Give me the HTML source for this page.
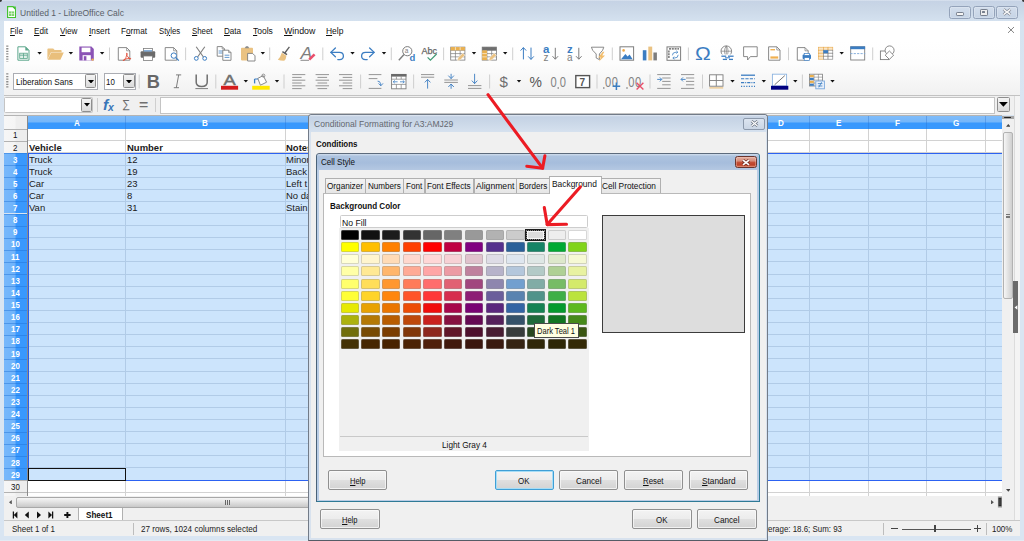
<!DOCTYPE html>
<html><head><meta charset="utf-8"><title>Untitled 1 - LibreOffice Calc</title>
<style>
html,body{margin:0;padding:0;}
body{width:1024px;height:541px;overflow:hidden;background:#d4e1ef;font-family:"Liberation Sans",sans-serif;}
#r{position:relative;width:1024px;height:541px;overflow:hidden;}
#r div,#r span.t,#r svg{position:absolute;box-sizing:border-box;}
span.t{white-space:nowrap;line-height:1;transform-origin:0 0;color:#000;}
span.t u{text-decoration:underline;text-decoration-thickness:0.7px;text-underline-offset:1px;}
</style></head><body><div id="r">
<div style="left:0px;top:0px;width:1024px;height:541px;background:linear-gradient(#d5e2ef 0,#d9e5f2 100px,#d9e5f2 100%);"></div>
<div style="left:0px;top:539.8px;width:1024px;height:1.2px;background:#e3ebf4;"></div>
<div style="left:0px;top:0px;width:1024px;height:21px;background:linear-gradient(#dfe7f2 0,#c6d3e5 1.2px,#cad7e7 8px,#d4e1ef 21px);"></div>
<svg style="left:7px;top:5.8px" width="9.2" height="12.2" viewBox="0 0 9.2 12.2"><path d="M0.6 0.6H5.8L8.6 3.4V11.6H0.6Z" fill="#fff" stroke="#43c330" stroke-width="1.2"/><path d="M5.6 0.4L8.8 3.6V0.4Z" fill="#43c330"/><rect x="2" y="5.4" width="5.2" height="4.6" fill="#7bd36b"/><path d="M2 7.6H7.2M4.6 5.4V10" stroke="#fff" stroke-width="0.5"/></svg>
<div style="left:0px;top:0px;width:1.6px;height:1.6px;background:#333;border-radius:0 0 2px 0;"></div>
<span class="t" style="left:20px;top:8.6px;font-size:9.1px;color:#5a5f68;transform:scaleX(0.936);">Untitled 1 - LibreOffice Calc</span>
<div style="left:949.2px;top:6.1px;width:21.7px;height:12.6px;border:1px solid #94a3ba;border-radius:2.5px;background:linear-gradient(#d3deec,#c6d4e6);box-shadow:inset 0 0 0 0.6px rgba(255,255,255,0.35);"></div>
<div style="left:956px;top:11.9px;width:8.4px;height:3.7px;border:1px solid #777f8d;background:#f4f4f4;border-radius:1.2px;"></div>
<div style="left:972.9px;top:6.1px;width:21.7px;height:12.6px;border:1px solid #94a3ba;border-radius:2.5px;background:linear-gradient(#d3deec,#c6d4e6);box-shadow:inset 0 0 0 0.6px rgba(255,255,255,0.35);"></div>
<div style="left:979.7px;top:9px;width:8px;height:6.5px;border:1.1px solid #777f8d;background:#eee;border-radius:1.2px;"></div>
<div style="left:982.3px;top:11.2px;width:3px;height:2.2px;background:#777f8d;border-radius:0.5px;"></div>
<div style="left:996.2px;top:6.1px;width:21.7px;height:12.6px;border:1px solid #94a3ba;border-radius:2.5px;background:linear-gradient(#d3deec,#c6d4e6);box-shadow:inset 0 0 0 0.6px rgba(255,255,255,0.35);"></div>
<svg style="left:1002.2px;top:8.4px" width="10" height="8" viewBox="0 0 10 8"><path d="M1.6 1.4L8.4 6.6M8.4 1.4L1.6 6.6" stroke="#7a8290" stroke-width="2.9"/><path d="M1.6 1.4L8.4 6.6M8.4 1.4L1.6 6.6" stroke="#f6f6f6" stroke-width="1.5"/></svg>
<div style="left:1022.2px;top:0px;width:1.8px;height:1.6px;background:#333;border-radius:0 0 0 2px;"></div>
<div style="left:4px;top:21px;width:1015.5px;height:20px;background:#fff;"></div>
<span class="t" style="left:10px;top:26.71px;font-size:9.2px;color:#111;transform:scaleX(0.863);"><u>F</u>ile</span>
<span class="t" style="left:34.3px;top:26.71px;font-size:9.2px;color:#111;transform:scaleX(0.883);"><u>E</u>dit</span>
<span class="t" style="left:59.8px;top:26.71px;font-size:9.2px;color:#111;transform:scaleX(0.885);"><u>V</u>iew</span>
<span class="t" style="left:89.1px;top:26.71px;font-size:9.2px;color:#111;transform:scaleX(0.900);"><u>I</u>nsert</span>
<span class="t" style="left:121.3px;top:26.71px;font-size:9.2px;color:#111;transform:scaleX(0.892);">F<u>o</u>rmat</span>
<span class="t" style="left:159.2px;top:26.71px;font-size:9.2px;color:#111;transform:scaleX(0.846);">St<u>y</u>les</span>
<span class="t" style="left:191.6px;top:26.71px;font-size:9.2px;color:#111;transform:scaleX(0.853);"><u>S</u>heet</span>
<span class="t" style="left:223.8px;top:26.71px;font-size:9.2px;color:#111;transform:scaleX(0.880);"><u>D</u>ata</span>
<span class="t" style="left:252.5px;top:26.71px;font-size:9.2px;color:#111;transform:scaleX(0.927);"><u>T</u>ools</span>
<span class="t" style="left:283.7px;top:26.71px;font-size:9.2px;color:#111;transform:scaleX(0.960);"><u>W</u>indow</span>
<span class="t" style="left:326.4px;top:26.71px;font-size:9.2px;color:#111;transform:scaleX(0.920);"><u>H</u>elp</span>
<svg style="left:1007.2px;top:26.1px" width="8" height="8" viewBox="0 0 8 8"><path d="M1 1L7 6.9M7 1L1 6.9" stroke="#666" stroke-width="0.8"/></svg>
<div style="left:4px;top:41px;width:1015.5px;height:54px;background:linear-gradient(#fff 0,#fdfdfd 40%,#f1f1f1 100%);"></div>
<div style="left:4px;top:94.6px;width:1015.5px;height:1.3px;background:#c2c2c2;"></div>
<svg style="left:0;top:0" width="1024" height="100" viewBox="0 0 1024 100"><path d="M7.30 45.50L7.30 61.50" stroke="#8c8c8c" stroke-width="2.2" fill="none" stroke-dasharray="1.3 1.3"/><path d="M17.9 46.8H25.5L29 50.3V60.2H17.9Z" fill="#fff" stroke="#5aa58a" stroke-width="1.0" /><path d="M25.3 46.6L29.2 50.5H25.3Z" fill="#5aa58a" /><rect x="19.70" y="53.20" width="7.60" height="5.20" fill="#dff0e8" stroke="#5aa58a" stroke-width="0.8"/><path d="M23.50 53.20L23.50 58.40" stroke="#5aa58a" stroke-width="0.8" fill="none" /><path d="M19.70 55.20L27.30 55.20" stroke="#5aa58a" stroke-width="0.8" fill="none" /><path d="M37.40 52.00h4.4l-2.2 2.4z" fill="#111" /><path d="M47.4 59.6V49.3Q47.4 48.4 48.3 48.4H53.2L54.6 50H60.8Q61.6 50 61.6 50.8V52.2H51L47.4 59.6Z" fill="#eac282" /><path d="M47.6 59.8L51.3 52.6H63.8L60.4 59.8Z" fill="#e9bf7c" /><path d="M68.70 52.00h4.4l-2.2 2.4z" fill="#111" /><path d="M79.3 46.5H91.4L93.8 48.9V60.4H79.3Z" fill="#8b53b5" /><rect x="81.60" y="47.60" width="8.80" height="4.60" fill="#fff"/><rect x="82.60" y="55.20" width="8.20" height="5.20" fill="#fff"/><rect x="83.80" y="56.20" width="2.60" height="4.20" fill="#8b53b5"/><circle cx="92.60" cy="59.60" r="1.20" fill="#f0b050"/><path d="M99.90 52.00h4.4l-2.2 2.4z" fill="#111" /><path d="M109.50 47.50L109.50 60.20" stroke="#c9c9c9" stroke-width="0.9" fill="none" /><path d="M118.30 47.60H126.60L129.80 50.80V60.20H118.30Z" fill="#fff" stroke="#7d7d7d" stroke-width="0.9" /><path d="M126.60 47.60V50.80H129.80" fill="none" stroke="#7d7d7d" stroke-width="0.7" /><path d="M123.6 61Q126.5 57.6 127 54.2Q127.3 52.6 126.6 53.2Q126.2 55.6 129.2 58.4Q131.8 59.6 130.6 58.4Q127.6 57.6 123.2 60.2Z" fill="none" stroke="#e2503c" stroke-width="0.9" /><rect x="140.60" y="51.20" width="14.60" height="6.60" fill="#6a6a6a" rx="1"/><rect x="143.40" y="48.40" width="9.00" height="3.40" fill="#fff" stroke="#7d7d7d" stroke-width="0.8"/><path d="M143.80 50.90L152.00 50.90" stroke="#3b7dc2" stroke-width="1" fill="none" /><rect x="143.40" y="56.00" width="9.00" height="4.40" fill="#fff" stroke="#7d7d7d" stroke-width="0.8"/><path d="M165.20 47.60H173.60L176.80 50.80V60.20H165.20Z" fill="#fff" stroke="#7d7d7d" stroke-width="0.9" /><path d="M173.60 47.60V50.80H176.80" fill="none" stroke="#7d7d7d" stroke-width="0.7" /><circle cx="173.80" cy="55.60" r="2.70" fill="#fff" stroke="#3b7dc2" stroke-width="1.0"/><path d="M175.80 57.60L178.80 60.60" stroke="#3b7dc2" stroke-width="1.3" fill="none" /><path d="M185.60 47.50L185.60 60.20" stroke="#c9c9c9" stroke-width="0.9" fill="none" /><path d="M196.20 46.80L203.40 57.00" stroke="#7d7d7d" stroke-width="1.1" fill="none" /><path d="M204.80 46.80L197.60 57.00" stroke="#7d7d7d" stroke-width="1.1" fill="none" /><circle cx="196.30" cy="58.40" r="1.90" fill="none" stroke="#3b7dc2" stroke-width="1.0"/><circle cx="204.70" cy="58.40" r="1.90" fill="none" stroke="#3b7dc2" stroke-width="1.0"/><path d="M217.20 46.60H222.20L224.60 49.00V56.20H217.20Z" fill="#fff" stroke="#7d7d7d" stroke-width="0.9" /><path d="M222.20 46.60V49.00H224.60" fill="none" stroke="#7d7d7d" stroke-width="0.7" /><path d="M218.60 51.00L223.00 51.00" stroke="#3b7dc2" stroke-width="0.8" fill="none" /><path d="M218.60 53.00L223.00 53.00" stroke="#3b7dc2" stroke-width="0.8" fill="none" /><path d="M222.80 50.20H228.60L231.00 52.60V60.30H222.80Z" fill="#fff" stroke="#7d7d7d" stroke-width="0.9" /><path d="M228.60 50.20V52.60H231.00" fill="none" stroke="#7d7d7d" stroke-width="0.7" /><path d="M224.60 55.20L229.40 55.20" stroke="#3b7dc2" stroke-width="0.8" fill="none" /><path d="M224.60 57.40L229.40 57.40" stroke="#3b7dc2" stroke-width="0.8" fill="none" /><rect x="241.00" y="47.80" width="12.00" height="12.60" fill="#eac282" rx="0.8"/><path d="M244.6 48.2L246 46.2H248L249.4 48.2Z" fill="#8a8a8a" /><path d="M247.6 53.4H252.6L255 55.8V61H247.6Z" fill="#fff" stroke="#7d7d7d" stroke-width="0.9" /><path d="M260.60 52.00h4.4l-2.2 2.4z" fill="#111" /><path d="M269.70 47.50L269.70 60.20" stroke="#c9c9c9" stroke-width="0.9" fill="none" /><path d="M289.40 46.80L284.80 53.00" stroke="#5c5c5c" stroke-width="1.3" fill="none" /><path d="M282.40 51.60L287.00 54.60" stroke="#5c5c5c" stroke-width="1.5" fill="none" /><path d="M281.8 52.8L286.4 55.8Q286 59.4 284.6 60.6Q281 60.8 277.8 59.8Q280.6 57 281.8 52.8Z" fill="#eac282" /><text x="300.40" y="58.90" font-size="16.40" fill="#7d7d7d" font-family="Liberation Sans, sans-serif" font-style="italic" textLength="11.80" lengthAdjust="spacingAndGlyphs">A</text><path d="M300.50 60.30L309.00 60.30" stroke="#7d7d7d" stroke-width="0.9" fill="none" /><path d="M309.20 59.60L314.60 54.40" stroke="#ea4f6b" stroke-width="2.6" fill="none" /><path d="M322.80 47.50L322.80 60.20" stroke="#c9c9c9" stroke-width="0.9" fill="none" /><path d="M335.4 48L330.8 52.4L335.4 56.8" fill="none" stroke="#3b7dc2" stroke-width="1.3" stroke-linecap="round" stroke-linejoin="round"/><path d="M331 52.4H339.4Q343.4 52.4 343.4 56Q343.4 59.4 339.6 59.6H337.8" fill="none" stroke="#3b7dc2" stroke-width="1.3" stroke-linecap="round"/><path d="M350.30 52.00h4.4l-2.2 2.4z" fill="#111" /><path d="M369.6 48L374.2 52.4L369.6 56.8" fill="none" stroke="#3b7dc2" stroke-width="1.3" stroke-linecap="round" stroke-linejoin="round"/><path d="M374 52.4H365.6Q361.6 52.4 361.6 56Q361.6 59.4 365.4 59.6H367.2" fill="none" stroke="#3b7dc2" stroke-width="1.3" stroke-linecap="round"/><path d="M381.80 52.00h4.4l-2.2 2.4z" fill="#111" /><path d="M391.30 47.50L391.30 60.20" stroke="#c9c9c9" stroke-width="0.9" fill="none" /><circle cx="407.30" cy="51.20" r="4.60" fill="none" stroke="#7d7d7d" stroke-width="1.0"/><path d="M404.00 54.60L398.80 60.20" stroke="#7d7d7d" stroke-width="1.4" fill="none" /><text x="404.80" y="53.40" font-size="6.50" fill="#7d7d7d" font-family="Liberation Sans, sans-serif">a</text><text x="409.60" y="61.00" font-size="9.50" fill="#3b7dc2" font-family="Liberation Sans, sans-serif" font-weight="bold">d</text><text stroke="#666" stroke-width="0.25" x="421.40" y="53.60" font-size="9.00" fill="#666" font-family="Liberation Sans, sans-serif" textLength="15.60" lengthAdjust="spacingAndGlyphs">Abc</text><path d="M427.6 57.4L430.4 60.2L436.6 54" fill="none" stroke="#3f9a74" stroke-width="1.2" /><path d="M443.60 47.50L443.60 60.20" stroke="#c9c9c9" stroke-width="0.9" fill="none" /><rect x="450.70" y="47.10" width="14.20" height="13.00" fill="#fff" stroke="#7d7d7d" stroke-width="0.8"/><path d="M450.70 50.35L464.90 50.35" stroke="#7d7d7d" stroke-width="0.7" fill="none" /><path d="M450.70 53.60L464.90 53.60" stroke="#7d7d7d" stroke-width="0.7" fill="none" /><path d="M450.70 56.85L464.90 56.85" stroke="#7d7d7d" stroke-width="0.7" fill="none" /><path d="M455.43 47.10L455.43 60.10" stroke="#7d7d7d" stroke-width="0.7" fill="none" /><path d="M460.17 47.10L460.17 60.10" stroke="#7d7d7d" stroke-width="0.7" fill="none" /><rect x="450.70" y="47.10" width="14.20" height="3.25" fill="#eab04e"/><path d="M455.43 47.10L455.43 50.35" stroke="#fff" stroke-width="0.6" fill="none" /><path d="M460.17 47.10L460.17 50.35" stroke="#fff" stroke-width="0.6" fill="none" /><path d="M458.10 57.70l4.6 -4.6l2.2 2.2l-4.6 4.6l-3 .8z" fill="#eac282" stroke="#fff" stroke-width="0.5" /><path d="M471.80 52.00h4.4l-2.2 2.4z" fill="#111" /><rect x="482.20" y="47.10" width="14.20" height="13.00" fill="#fff" stroke="#7d7d7d" stroke-width="0.8"/><path d="M482.20 50.35L496.40 50.35" stroke="#7d7d7d" stroke-width="0.7" fill="none" /><path d="M482.20 53.60L496.40 53.60" stroke="#7d7d7d" stroke-width="0.7" fill="none" /><path d="M482.20 56.85L496.40 56.85" stroke="#7d7d7d" stroke-width="0.7" fill="none" /><path d="M486.93 47.10L486.93 60.10" stroke="#7d7d7d" stroke-width="0.7" fill="none" /><path d="M491.67 47.10L491.67 60.10" stroke="#7d7d7d" stroke-width="0.7" fill="none" /><rect x="482.20" y="47.10" width="14.20" height="3.25" fill="#6e6e6e"/><rect x="482.20" y="50.35" width="4.73" height="9.75" fill="#eab04e"/><path d="M482.20 53.60L486.93 53.60" stroke="#fff" stroke-width="0.6" fill="none" /><path d="M482.20 56.85L486.93 56.85" stroke="#fff" stroke-width="0.6" fill="none" /><path d="M489.60 57.70l4.6 -4.6l2.2 2.2l-4.6 4.6l-3 .8z" fill="#eac282" stroke="#fff" stroke-width="0.5" /><path d="M503.00 52.00h4.4l-2.2 2.4z" fill="#111" /><path d="M512.70 47.50L512.70 60.20" stroke="#c9c9c9" stroke-width="0.9" fill="none" /><path d="M523.40 59.40L523.40 47.60" stroke="#3b7dc2" stroke-width="1.0" fill="none" /><path d="M520.60 50.60L523.40 47.60L526.20 50.60" fill="none" stroke="#3b7dc2" stroke-width="1.0" /><path d="M531.00 47.60L531.00 59.40" stroke="#3b7dc2" stroke-width="1.0" fill="none" /><path d="M528.20 56.40L531.00 59.40L533.80 56.40" fill="none" stroke="#3b7dc2" stroke-width="1.0" /><text x="543.00" y="53.40" font-size="11.50" fill="#3b7dc2" font-family="Liberation Sans, sans-serif" font-weight="bold">a</text><text x="543.60" y="60.60" font-size="10.00" fill="#7d7d7d" font-family="Liberation Sans, sans-serif">z</text><path d="M555.30 47.80L555.30 59.20" stroke="#7d7d7d" stroke-width="1.0" fill="none" /><path d="M552.50 56.20L555.30 59.20L558.10 56.20" fill="none" stroke="#7d7d7d" stroke-width="1.0" /><text x="567.00" y="53.40" font-size="11.50" fill="#3b7dc2" font-family="Liberation Sans, sans-serif" font-weight="bold">z</text><text x="567.00" y="60.60" font-size="10.00" fill="#7d7d7d" font-family="Liberation Sans, sans-serif">a</text><path d="M578.80 47.80L578.80 59.20" stroke="#7d7d7d" stroke-width="1.0" fill="none" /><path d="M576.00 56.20L578.80 59.20L581.60 56.20" fill="none" stroke="#7d7d7d" stroke-width="1.0" /><path d="M591.4 47.2H603.8Q603.6 50 599.4 54V59.6L596.2 58V54Q591.6 50 591.4 47.2Z" fill="none" stroke="#7d7d7d" stroke-width="0.9" /><path d="M602.8 51.8L598.2 57.4H600.8L599 61.4L605 55.4H602.2L604.4 51.8Z" fill="#f2bd6c" /><path d="M612.30 47.50L612.30 60.20" stroke="#c9c9c9" stroke-width="0.9" fill="none" /><rect x="620.00" y="46.80" width="13.60" height="13.40" fill="#fff" stroke="#7d7d7d" stroke-width="1.0"/><path d="M621 59.2L625.4 54L627.6 56.4L629.6 54.6L632.6 59.2Z" fill="#3b7dc2" /><circle cx="623.60" cy="50.40" r="1.30" fill="#f0a848"/><rect x="642.80" y="50.20" width="3.60" height="10.20" fill="#3b7dc2"/><rect x="648.30" y="46.60" width="3.90" height="13.80" fill="#eac282"/><rect x="653.40" y="52.50" width="3.50" height="7.90" fill="#7d7d7d"/><rect x="667.00" y="46.90" width="13.60" height="13.40" fill="#fff" stroke="#7d7d7d" stroke-width="1.0"/><path d="M669.00 48.80L679.00 48.80" stroke="#555" stroke-width="1.2" fill="none" stroke-dasharray="2 0.8"/><path d="M668.90 50.50L668.90 58.60" stroke="#555" stroke-width="1.2" fill="none" stroke-dasharray="2 0.8"/><path d="M672.4 55.4Q672.4 52.2 676 52.2H677.6M676.4 50.8L677.8 52.2L676.4 53.6" fill="none" stroke="#3b7dc2" stroke-width="0.8" /><path d="M678.2 54.8Q678.2 58 674.6 58H673M674.2 56.6L672.8 58L674.2 59.4" fill="none" stroke="#3b7dc2" stroke-width="0.8" /><path d="M688.40 47.50L688.40 60.20" stroke="#c9c9c9" stroke-width="0.9" fill="none" /><text x="695.00" y="60.20" font-size="18.00" fill="#3b7dc2" font-family="Liberation Sans, sans-serif" textLength="15.80" lengthAdjust="spacingAndGlyphs">Ω</text><circle cx="726.30" cy="51.20" r="5.30" fill="none" stroke="#7d7d7d" stroke-width="0.9"/><path d="M726.30 45.90L726.30 56.50" stroke="#7d7d7d" stroke-width="0.7" fill="none" /><path d="M721.00 51.20L731.60 51.20" stroke="#7d7d7d" stroke-width="0.7" fill="none" /><path d="M726.3 45.9Q722.6 51.2 726.3 56.5M726.3 45.9Q730 51.2 726.3 56.5" fill="none" stroke="#7d7d7d" stroke-width="0.7" /><rect x="719.60" y="54.40" width="15.00" height="6.40" fill="#fff"/><path d="M721.40 56.20L726.20 56.20" stroke="#3b7dc2" stroke-width="1.3" fill="none" /><path d="M728.00 56.20L733.60 56.20" stroke="#3b7dc2" stroke-width="1.3" fill="none" /><path d="M722.80 59.40L727.00 59.40" stroke="#3b7dc2" stroke-width="1.3" fill="none" /><path d="M729.00 59.40L733.00 59.40" stroke="#3b7dc2" stroke-width="1.3" fill="none" /><path d="M725.00 57.80L730.00 57.80" stroke="#3b7dc2" stroke-width="1.0" fill="none" /><path d="M743.6 46.8H757.2V56.6H750.4L747.6 60V56.6H743.6Z" fill="#fff" stroke="#7d7d7d" stroke-width="0.9" /><path d="M768.60 46.80H776.80L780.00 50.00V60.20H768.60Z" fill="#fff" stroke="#7d7d7d" stroke-width="0.9" /><path d="M776.80 46.80V50.00H780.00" fill="none" stroke="#7d7d7d" stroke-width="0.7" /><rect x="770.40" y="49.00" width="4.60" height="1.40" fill="#f0b050"/><rect x="770.40" y="56.40" width="7.80" height="2.20" fill="#f0b050"/><path d="M788.50 47.50L788.50 60.20" stroke="#c9c9c9" stroke-width="0.9" fill="none" /><path d="M797.30 47.60H805.00L808.20 50.80V60.20H797.30Z" fill="#fff" stroke="#7d7d7d" stroke-width="0.9" /><path d="M805.00 47.60V50.80H808.20" fill="none" stroke="#7d7d7d" stroke-width="0.7" /><rect x="802.60" y="54.60" width="8.40" height="4.40" fill="#3b7dc2" rx="0.8"/><rect x="804.20" y="53.40" width="5.20" height="2.00" fill="#fff" stroke="#3b7dc2" stroke-width="0.7"/><rect x="804.20" y="57.60" width="5.20" height="3.00" fill="#fff" stroke="#3b7dc2" stroke-width="0.7"/><rect x="818.60" y="47.20" width="4.73" height="3.00" fill="#fbe6c6" stroke="#e9a94a" stroke-width="0.6"/><rect x="823.33" y="47.20" width="4.73" height="3.00" fill="#fbe6c6" stroke="#e9a94a" stroke-width="0.6"/><rect x="828.06" y="47.20" width="4.73" height="3.00" fill="#fbe6c6" stroke="#e9a94a" stroke-width="0.6"/><rect x="818.60" y="50.20" width="4.73" height="3.00" fill="#fbe6c6" stroke="#e9a94a" stroke-width="0.6"/><rect x="823.33" y="50.20" width="4.73" height="3.00" fill="#fff" stroke="#7d7d7d" stroke-width="0.6"/><rect x="828.06" y="50.20" width="4.73" height="3.00" fill="#fff" stroke="#7d7d7d" stroke-width="0.6"/><rect x="818.60" y="53.20" width="4.73" height="3.00" fill="#fbe6c6" stroke="#e9a94a" stroke-width="0.6"/><rect x="823.33" y="53.20" width="4.73" height="3.00" fill="#fff" stroke="#7d7d7d" stroke-width="0.6"/><rect x="828.06" y="53.20" width="4.73" height="3.00" fill="#fff" stroke="#7d7d7d" stroke-width="0.6"/><rect x="818.60" y="56.20" width="4.73" height="3.00" fill="#fbe6c6" stroke="#e9a94a" stroke-width="0.6"/><rect x="823.33" y="56.20" width="4.73" height="3.00" fill="#fff" stroke="#7d7d7d" stroke-width="0.6"/><rect x="828.06" y="56.20" width="4.73" height="3.00" fill="#fff" stroke="#7d7d7d" stroke-width="0.6"/><rect x="823.33" y="50.20" width="4.73" height="3.00" fill="#3b7dc2"/><path d="M839.50 52.00h4.4l-2.2 2.4z" fill="#111" /><rect x="850.70" y="46.80" width="14.00" height="13.20" fill="#fff" stroke="#7d7d7d" stroke-width="0.9"/><rect x="850.30" y="46.40" width="14.80" height="2.80" fill="#3b7dc2"/><path d="M850.30 53.60L865.20 53.60" stroke="#7aa7d8" stroke-width="0.9" fill="none" stroke-dasharray="2.2 1.2"/><path d="M872.70 47.50L872.70 60.20" stroke="#c9c9c9" stroke-width="0.9" fill="none" /><rect x="880.40" y="51.00" width="8.60" height="8.60" fill="#fff" stroke="#7d7d7d" stroke-width="0.9"/><circle cx="889.60" cy="50.40" r="4.50" fill="#fff" stroke="#7d7d7d" stroke-width="0.9"/><path d="M889.4 51L893.6 55.2L889.4 59.4L885.2 55.2Z" fill="#fff" stroke="#7d7d7d" stroke-width="0.9" /><path d="M7.30 73.30L7.30 88.50" stroke="#8c8c8c" stroke-width="2.2" fill="none" stroke-dasharray="1.3 1.3"/><path d="M139.20 74.50L139.20 88.50" stroke="#c9c9c9" stroke-width="0.9" fill="none" /><text x="146.80" y="88.00" font-size="18.80" fill="#676767" font-family="Liberation Sans, sans-serif" font-weight="bold" textLength="13.20" lengthAdjust="spacingAndGlyphs">B</text><path d="M176 74.9H181.2M173.8 87.7H179M178.7 74.9L176.3 87.7" fill="none" stroke="#6f6f6f" stroke-width="0.9" /><path d="M196.2 74.6V82.2Q196.2 86.4 201.7 86.4Q207.2 86.4 207.2 82.2V74.6" fill="none" stroke="#6f6f6f" stroke-width="1.5" /><path d="M195.40 88.60L208.00 88.60" stroke="#6f6f6f" stroke-width="0.9" fill="none" /><path d="M215.80 74.50L215.80 88.50" stroke="#c9c9c9" stroke-width="0.9" fill="none" /><text stroke="#6f6f6f" stroke-width="0.45" x="223.40" y="85.00" font-size="14.80" fill="#6f6f6f" font-family="Liberation Sans, sans-serif" textLength="12.20" lengthAdjust="spacingAndGlyphs">A</text><rect x="221.00" y="85.80" width="17.10" height="3.90" fill="#d41c1c"/><path d="M243.60 80.00h4.4l-2.2 2.4z" fill="#111" /><path d="M257.8 78.4L263.2 75.6L266.6 82.2L260.4 85.2Z" fill="#fff" stroke="#7d7d7d" stroke-width="0.9" /><circle cx="263.40" cy="75.60" r="1.50" fill="none" stroke="#7d7d7d" stroke-width="0.8"/><path d="M254.6 79V83.4" fill="none" stroke="#3b7dc2" stroke-width="1.3" /><path d="M254.6 79H258" fill="none" stroke="#3b7dc2" stroke-width="1.0" /><rect x="252.20" y="85.80" width="17.50" height="3.90" fill="#ffe800"/><path d="M274.80 80.00h4.4l-2.2 2.4z" fill="#111" /><path d="M284.00 74.50L284.00 88.50" stroke="#c9c9c9" stroke-width="0.9" fill="none" /><path d="M292.20 74.60L305.30 74.60" stroke="#8a8a8a" stroke-width="0.9" fill="none" /><path d="M292.20 77.40L301.63 77.40" stroke="#8a8a8a" stroke-width="0.9" fill="none" /><path d="M292.20 80.20L305.30 80.20" stroke="#8a8a8a" stroke-width="0.9" fill="none" /><path d="M292.20 83.00L301.63 83.00" stroke="#8a8a8a" stroke-width="0.9" fill="none" /><path d="M292.20 85.80L305.30 85.80" stroke="#8a8a8a" stroke-width="0.9" fill="none" /><path d="M292.20 88.60L301.63 88.60" stroke="#8a8a8a" stroke-width="0.9" fill="none" /><path d="M315.60 74.60L329.00 74.60" stroke="#8a8a8a" stroke-width="0.9" fill="none" /><path d="M317.48 77.40L327.12 77.40" stroke="#8a8a8a" stroke-width="0.9" fill="none" /><path d="M315.60 80.20L329.00 80.20" stroke="#8a8a8a" stroke-width="0.9" fill="none" /><path d="M317.48 83.00L327.12 83.00" stroke="#8a8a8a" stroke-width="0.9" fill="none" /><path d="M315.60 85.80L329.00 85.80" stroke="#8a8a8a" stroke-width="0.9" fill="none" /><path d="M317.48 88.60L327.12 88.60" stroke="#8a8a8a" stroke-width="0.9" fill="none" /><path d="M339.00 74.60L352.20 74.60" stroke="#8a8a8a" stroke-width="0.9" fill="none" /><path d="M342.70 77.40L352.20 77.40" stroke="#8a8a8a" stroke-width="0.9" fill="none" /><path d="M339.00 80.20L352.20 80.20" stroke="#8a8a8a" stroke-width="0.9" fill="none" /><path d="M342.70 83.00L352.20 83.00" stroke="#8a8a8a" stroke-width="0.9" fill="none" /><path d="M339.00 85.80L352.20 85.80" stroke="#8a8a8a" stroke-width="0.9" fill="none" /><path d="M342.70 88.60L352.20 88.60" stroke="#8a8a8a" stroke-width="0.9" fill="none" /><path d="M360.60 74.50L360.60 88.50" stroke="#c9c9c9" stroke-width="0.9" fill="none" /><path d="M368.70 74.60L381.40 74.60" stroke="#8a8a8a" stroke-width="0.9" fill="none" /><path d="M368.70 78.60L377.40 78.60" stroke="#8a8a8a" stroke-width="0.9" fill="none" /><path d="M368.70 88.40L381.40 88.40" stroke="#8a8a8a" stroke-width="0.9" fill="none" /><path d="M377.6 81.2Q380.8 81.2 380.8 85.4M378.6 83.4L380.8 85.8L383 83.4" fill="none" stroke="#3b7dc2" stroke-width="0.9" /><rect x="391.60" y="74.40" width="14.40" height="14.40" fill="#fff" stroke="#7d7d7d" stroke-width="0.9"/><rect x="391.20" y="74.00" width="15.20" height="2.60" fill="#6a6a6a"/><path d="M391.60 79.20L406.00 79.20" stroke="#7d7d7d" stroke-width="0.7" fill="none" /><path d="M391.60 84.40L406.00 84.40" stroke="#7d7d7d" stroke-width="0.7" fill="none" /><path d="M396.40 76.60L396.40 79.20" stroke="#7d7d7d" stroke-width="0.7" fill="none" /><path d="M401.20 76.60L401.20 79.20" stroke="#7d7d7d" stroke-width="0.7" fill="none" /><path d="M396.40 84.40L396.40 88.80" stroke="#7d7d7d" stroke-width="0.7" fill="none" /><path d="M401.20 84.40L401.20 88.80" stroke="#7d7d7d" stroke-width="0.7" fill="none" /><path d="M393.4 81.8H397.6M394.8 80.4L393.2 81.8L394.8 83.2M404.2 81.8H400M402.8 80.4L404.4 81.8L402.8 83.2" fill="none" stroke="#3b7dc2" stroke-width="0.8" /><path d="M413.60 74.50L413.60 88.50" stroke="#c9c9c9" stroke-width="0.9" fill="none" /><path d="M421.00 74.60L434.20 74.60" stroke="#8a8a8a" stroke-width="0.9" fill="none" /><path d="M421.00 77.20L434.20 77.20" stroke="#8a8a8a" stroke-width="0.9" fill="none" /><path d="M427.60 88.60L427.60 79.40" stroke="#3b7dc2" stroke-width="0.9" fill="none" /><path d="M424.80 82.40L427.60 79.40L430.40 82.40" fill="none" stroke="#3b7dc2" stroke-width="0.9" /><path d="M444.30 80.00L457.90 80.00" stroke="#8a8a8a" stroke-width="0.9" fill="none" /><path d="M444.30 82.40L457.90 82.40" stroke="#8a8a8a" stroke-width="0.9" fill="none" /><path d="M451.10 73.80L451.10 78.60" stroke="#3b7dc2" stroke-width="0.9" fill="none" /><path d="M448.30 75.60L451.10 78.60L453.90 75.60" fill="none" stroke="#3b7dc2" stroke-width="0.9" /><path d="M451.10 88.80L451.10 84.00" stroke="#3b7dc2" stroke-width="0.9" fill="none" /><path d="M448.30 87.00L451.10 84.00L453.90 87.00" fill="none" stroke="#3b7dc2" stroke-width="0.9" /><path d="M468.00 85.60L481.40 85.60" stroke="#8a8a8a" stroke-width="0.9" fill="none" /><path d="M468.00 88.40L481.40 88.40" stroke="#8a8a8a" stroke-width="0.9" fill="none" /><path d="M474.60 73.80L474.60 83.60" stroke="#3b7dc2" stroke-width="0.9" fill="none" /><path d="M471.80 80.60L474.60 83.60L477.40 80.60" fill="none" stroke="#3b7dc2" stroke-width="0.9" /><path d="M489.60 74.50L489.60 88.50" stroke="#c9c9c9" stroke-width="0.9" fill="none" /><text x="499.40" y="87.20" font-size="15.00" fill="#6f6f6f" font-family="Liberation Sans, sans-serif" textLength="8.40" lengthAdjust="spacingAndGlyphs">$</text><path d="M516.80 80.00h4.4l-2.2 2.4z" fill="#111" /><text x="529.40" y="87.00" font-size="14.20" fill="#555" font-family="Liberation Sans, sans-serif" textLength="12.40" lengthAdjust="spacingAndGlyphs">%</text><text x="550.60" y="87.20" font-size="14.60" fill="#838383" font-family="Liberation Sans, sans-serif" textLength="6.20" lengthAdjust="spacingAndGlyphs">0</text><text x="559.80" y="87.20" font-size="14.60" fill="#838383" font-family="Liberation Sans, sans-serif" textLength="6.20" lengthAdjust="spacingAndGlyphs">0</text><rect x="557.60" y="87.40" width="1.20" height="1.20" fill="#555"/><rect x="575.80" y="75.60" width="13.80" height="12.00" fill="#fff" stroke="#555" stroke-width="1.4"/><text x="579.60" y="85.80" font-size="10.00" fill="#555" font-family="Liberation Sans, sans-serif" font-weight="bold" textLength="5.60" lengthAdjust="spacingAndGlyphs">7</text><path d="M597.00 74.50L597.00 88.50" stroke="#c9c9c9" stroke-width="0.9" fill="none" /><rect x="603.20" y="87.40" width="1.20" height="1.20" fill="#555"/><text x="605.00" y="87.20" font-size="14.60" fill="#838383" font-family="Liberation Sans, sans-serif" textLength="6.20" lengthAdjust="spacingAndGlyphs">0</text><text x="611.80" y="87.20" font-size="14.60" fill="#838383" font-family="Liberation Sans, sans-serif" textLength="6.20" lengthAdjust="spacingAndGlyphs">0</text><path d="M612.6 86.2H620.2M616.4 82.4V90" fill="none" stroke="#3b7dc2" stroke-width="1.5" /><rect x="626.40" y="87.40" width="1.20" height="1.20" fill="#555"/><text x="628.20" y="87.20" font-size="14.60" fill="#838383" font-family="Liberation Sans, sans-serif" textLength="6.20" lengthAdjust="spacingAndGlyphs">0</text><text x="635.00" y="87.20" font-size="14.60" fill="#838383" font-family="Liberation Sans, sans-serif" textLength="6.20" lengthAdjust="spacingAndGlyphs">0</text><path d="M636.6 82.8L643.4 89.6M643.4 82.8L636.6 89.6" fill="none" stroke="#e8506a" stroke-width="1.4" /><path d="M650.00 74.50L650.00 88.50" stroke="#c9c9c9" stroke-width="0.9" fill="none" /><path d="M657.20 74.60L670.60 74.60" stroke="#8a8a8a" stroke-width="0.9" fill="none" /><path d="M657.20 88.40L670.60 88.40" stroke="#8a8a8a" stroke-width="0.9" fill="none" /><path d="M662.20 78.00L670.60 78.00" stroke="#8a8a8a" stroke-width="0.9" fill="none" /><path d="M662.20 81.40L670.60 81.40" stroke="#8a8a8a" stroke-width="0.9" fill="none" /><path d="M662.20 84.80L670.60 84.80" stroke="#8a8a8a" stroke-width="0.9" fill="none" /><path d="M657.20 79.4H661.60M659.80 77.4L661.80 79.4L659.80 81.4" fill="none" stroke="#3b7dc2" stroke-width="0.9" /><path d="M681.00 74.60L694.20 74.60" stroke="#8a8a8a" stroke-width="0.9" fill="none" /><path d="M681.00 88.40L694.20 88.40" stroke="#8a8a8a" stroke-width="0.9" fill="none" /><path d="M686.00 78.00L694.20 78.00" stroke="#8a8a8a" stroke-width="0.9" fill="none" /><path d="M686.00 81.40L694.20 81.40" stroke="#8a8a8a" stroke-width="0.9" fill="none" /><path d="M686.00 84.80L694.20 84.80" stroke="#8a8a8a" stroke-width="0.9" fill="none" /><path d="M685.60 79.4H681.20M683.00 77.4L681.00 79.4L683.00 81.4" fill="none" stroke="#3b7dc2" stroke-width="0.9" /><path d="M702.50 74.50L702.50 88.50" stroke="#c9c9c9" stroke-width="0.9" fill="none" /><rect x="709.60" y="74.80" width="13.40" height="11.40" fill="#fff" stroke="#7d7d7d" stroke-width="0.9"/><path d="M716.30 74.80L716.30 86.20" stroke="#7d7d7d" stroke-width="0.9" fill="none" /><path d="M709.60 80.50L723.00 80.50" stroke="#7d7d7d" stroke-width="0.9" fill="none" /><path d="M709.40 87.90L723.20 87.90" stroke="#eac282" stroke-width="1.2" fill="none" /><path d="M730.30 80.00h4.4l-2.2 2.4z" fill="#111" /><path d="M741.00 75.20L755.00 75.20" stroke="#3b7dc2" stroke-width="1.3" fill="none" /><path d="M741.00 78.80L755.00 78.80" stroke="#3b7dc2" stroke-width="1.1" fill="none" stroke-dasharray="3.2 1.2"/><path d="M741.00 82.60L755.00 82.60" stroke="#3b7dc2" stroke-width="1.1" fill="none" stroke-dasharray="3.2 1 1 1"/><path d="M741.00 86.40L755.00 86.40" stroke="#3b7dc2" stroke-width="1.1" fill="none" stroke-dasharray="1.2 1.4"/><path d="M761.60 80.00h4.4l-2.2 2.4z" fill="#111" /><rect x="772.40" y="74.20" width="14.20" height="11.80" fill="#fff" stroke="#8db4e0" stroke-width="0.9"/><path d="M774.60 84.80L784.80 75.60" stroke="#777" stroke-width="1.0" fill="none" /><rect x="771.00" y="85.80" width="17.30" height="3.90" fill="#000080"/><path d="M793.10 80.00h4.4l-2.2 2.4z" fill="#111" /><path d="M802.40 74.50L802.40 88.50" stroke="#c9c9c9" stroke-width="0.9" fill="none" /><rect x="809.60" y="74.20" width="13.00" height="11.80" fill="#fff" stroke="#7d7d7d" stroke-width="0.8"/><path d="M809.60 77.15L822.60 77.15" stroke="#7d7d7d" stroke-width="0.6" fill="none" /><path d="M809.60 80.10L822.60 80.10" stroke="#7d7d7d" stroke-width="0.6" fill="none" /><path d="M809.60 83.05L822.60 83.05" stroke="#7d7d7d" stroke-width="0.6" fill="none" /><path d="M814.00 74.20L814.00 86.00" stroke="#7d7d7d" stroke-width="0.6" fill="none" /><path d="M818.40 74.20L818.40 86.00" stroke="#7d7d7d" stroke-width="0.6" fill="none" /><rect x="809.80" y="75.00" width="4.00" height="2.00" fill="#eab04e"/><rect x="809.80" y="78.00" width="4.00" height="2.00" fill="#3b7dc2"/><rect x="809.80" y="80.90" width="4.00" height="2.00" fill="#eab04e"/><rect x="809.80" y="83.80" width="4.00" height="2.00" fill="#3b7dc2"/><rect x="815.80" y="81.00" width="8.60" height="7.80" fill="#e9f1fb" stroke="#79a7dc" stroke-width="0.9"/><path d="M817.8 83.6H822.4M817.8 86H822.4M821.6 82.2L818.8 87.4" fill="none" stroke="#3b7dc2" stroke-width="0.8" /><path d="M830.30 80.00h4.4l-2.2 2.4z" fill="#111" /></svg>
<div style="left:12.8px;top:73.3px;width:85.3px;height:16.4px;background:#fff;border:1px solid #abadb3;"></div>
<span class="t" style="left:15.7px;top:77.81px;font-size:9.2px;color:#111;transform:scaleX(0.892);">Liberation Sans</span>
<div style="left:85.2px;top:74.3px;width:11.3px;height:14.2px;border:1px solid #8e8e8e;border-radius:1.5px;background:linear-gradient(#f4f4f4,#dadada);"></div>
<svg style="left:87.85px;top:79.8px" width="6" height="3.6" viewBox="0 0 6 3.6"><path d="M0 0H6L3 3.6Z" fill="#000"/></svg>
<div style="left:103.9px;top:73.3px;width:32.6px;height:16.4px;background:#fff;border:1px solid #abadb3;"></div>
<span class="t" style="left:106.4px;top:77.81px;font-size:9.2px;color:#111;transform:scaleX(0.860);">10</span>
<div style="left:123.4px;top:74.3px;width:11.8px;height:14.2px;border:1px solid #8e8e8e;border-radius:1.5px;background:linear-gradient(#f4f4f4,#dadada);"></div>
<svg style="left:126.3px;top:79.8px" width="6" height="3.6" viewBox="0 0 6 3.6"><path d="M0 0H6L3 3.6Z" fill="#000"/></svg>
<div style="left:4px;top:95.8px;width:1015.5px;height:19.5px;background:#f0f0f0;"></div>
<div style="left:4.4px;top:96.5px;width:88.8px;height:16.5px;background:#fff;border:1px solid #c4c4c4;border-radius:1.5px;"></div>
<div style="left:80.6px;top:98px;width:11.9px;height:13.6px;border:1px solid #8e8e8e;border-radius:1.5px;background:linear-gradient(#f4f4f4,#dadada);"></div>
<svg style="left:83.55px;top:103.2px" width="6" height="3.6" viewBox="0 0 6 3.6"><path d="M0 0H6L3 3.6Z" fill="#000"/></svg>
<div style="left:96.5px;top:98px;width:1px;height:14px;background:#cfcfcf;"></div>
<span class="t" style="left:102.8px;top:98.15px;font-size:14px;font-weight:bold;color:#3a76b8;transform:scaleX(1.115);font-style:italic;">f</span>
<span class="t" style="left:107.9px;top:101.71px;font-size:10.5px;font-weight:bold;color:#3a76b8;transform:scaleX(0.993);font-style:italic;">x</span>
<span class="t" style="left:122.4px;top:99.07px;font-size:11.5px;color:#6a6a6a;transform:scaleX(0.976);">∑</span>
<span class="t" style="left:139.3px;top:98.3px;font-size:13px;font-weight:bold;color:#707070;transform:scaleX(1.212);">=</span>
<div style="left:155px;top:98px;width:1px;height:14px;background:#cfcfcf;"></div>
<div style="left:159.5px;top:97px;width:835px;height:16.5px;background:#fff;border:1px solid #c4c4c4;"></div>
<div style="left:997.2px;top:97.2px;width:12.7px;height:15.2px;border:1px solid #8e8e8e;border-radius:1.5px;background:linear-gradient(#f4f4f4,#dadada);"></div>
<svg style="left:999.2px;top:102.2px" width="8.8" height="5" viewBox="0 0 8.8 5"><path d="M0 0H8.8L4.4 4.8Z" fill="#000"/></svg>
<div style="left:4px;top:115.5px;width:23.6px;height:13.2px;background:linear-gradient(90deg,#f7f7f7 0,#f5f5f5 46%,#eeeeee 50%);"></div>
<div style="left:4px;top:115.1px;width:998px;height:0.8px;background:#b4b4b4;"></div>
<div style="left:27.6px;top:115.5px;width:974.4px;height:13.2px;background:linear-gradient(#7fbcfa 0,#74b6fa 48%,#3898fd 52%,#3898fd 100%);"></div>
<div style="left:124.8px;top:115.5px;width:1px;height:13.2px;background:rgba(40,110,200,0.35);"></div>
<div style="left:284.6px;top:115.5px;width:1px;height:13.2px;background:rgba(40,110,200,0.35);"></div>
<div style="left:750.5px;top:115.5px;width:1px;height:13.2px;background:rgba(40,110,200,0.35);"></div>
<div style="left:809px;top:115.5px;width:1px;height:13.2px;background:rgba(40,110,200,0.35);"></div>
<div style="left:867.8px;top:115.5px;width:1px;height:13.2px;background:rgba(40,110,200,0.35);"></div>
<div style="left:925.8px;top:115.5px;width:1px;height:13.2px;background:rgba(40,110,200,0.35);"></div>
<div style="left:985.1px;top:115.5px;width:1px;height:13.2px;background:rgba(40,110,200,0.35);"></div>
<span class="t" style="left:73.58px;top:119.15px;font-size:8.8px;font-weight:bold;color:#fff;transform:scaleX(0.920);">A</span>
<span class="t" style="left:202.38px;top:119.15px;font-size:8.8px;font-weight:bold;color:#fff;transform:scaleX(0.920);">B</span>
<span class="t" style="left:515.08px;top:119.15px;font-size:8.8px;font-weight:bold;color:#fff;transform:scaleX(0.920);">C</span>
<span class="t" style="left:777.58px;top:119.15px;font-size:8.8px;font-weight:bold;color:#fff;transform:scaleX(0.920);">D</span>
<span class="t" style="left:836.3px;top:119.15px;font-size:8.8px;font-weight:bold;color:#fff;transform:scaleX(0.920);">E</span>
<span class="t" style="left:895.03px;top:119.15px;font-size:8.8px;font-weight:bold;color:#fff;transform:scaleX(0.920);">F</span>
<span class="t" style="left:952.85px;top:119.15px;font-size:8.8px;font-weight:bold;color:#fff;transform:scaleX(0.920);">G</span>
<div style="left:27.6px;top:128.7px;width:974.4px;height:367.3px;background:#fff;"></div>
<div style="left:27.6px;top:152.93px;width:974.4px;height:327.11px;background:#cce4fc;"></div>
<div style="left:4px;top:128.7px;width:23.6px;height:12.12px;background:linear-gradient(90deg,#f6f6f6 0,#f4f4f4 46%,#ededed 50%);border-top:1px solid #b2b2b2;"></div>
<span class="t" style="left:13.4px;top:131.45px;font-size:8.8px;color:#111;transform:scaleX(0.900);">1</span>
<div style="left:4px;top:140.81px;width:23.6px;height:12.12px;background:linear-gradient(90deg,#f6f6f6 0,#f4f4f4 46%,#ededed 50%);border-top:1px solid #b2b2b2;"></div>
<span class="t" style="left:13.4px;top:143.57px;font-size:8.8px;color:#111;transform:scaleX(0.900);">2</span>
<div style="left:4px;top:152.93px;width:23.6px;height:12.12px;background:linear-gradient(90deg,#78b8fb 0,#6fb3fb 46%,#3998fd 50%);border-top:1px solid rgba(30,110,210,0.45);"></div>
<span class="t" style="left:13.4px;top:155.68px;font-size:8.8px;font-weight:bold;color:#fff;transform:scaleX(0.900);">3</span>
<div style="left:4px;top:165.04px;width:23.6px;height:12.12px;background:linear-gradient(90deg,#78b8fb 0,#6fb3fb 46%,#3998fd 50%);border-top:1px solid rgba(30,110,210,0.45);"></div>
<span class="t" style="left:13.4px;top:167.8px;font-size:8.8px;font-weight:bold;color:#fff;transform:scaleX(0.900);">4</span>
<div style="left:4px;top:177.16px;width:23.6px;height:12.12px;background:linear-gradient(90deg,#78b8fb 0,#6fb3fb 46%,#3998fd 50%);border-top:1px solid rgba(30,110,210,0.45);"></div>
<span class="t" style="left:13.4px;top:179.91px;font-size:8.8px;font-weight:bold;color:#fff;transform:scaleX(0.900);">5</span>
<div style="left:4px;top:189.27px;width:23.6px;height:12.12px;background:linear-gradient(90deg,#78b8fb 0,#6fb3fb 46%,#3998fd 50%);border-top:1px solid rgba(30,110,210,0.45);"></div>
<span class="t" style="left:13.4px;top:192.03px;font-size:8.8px;font-weight:bold;color:#fff;transform:scaleX(0.900);">6</span>
<div style="left:4px;top:201.39px;width:23.6px;height:12.12px;background:linear-gradient(90deg,#78b8fb 0,#6fb3fb 46%,#3998fd 50%);border-top:1px solid rgba(30,110,210,0.45);"></div>
<span class="t" style="left:13.4px;top:204.14px;font-size:8.8px;font-weight:bold;color:#fff;transform:scaleX(0.900);">7</span>
<div style="left:4px;top:213.5px;width:23.6px;height:12.12px;background:linear-gradient(90deg,#78b8fb 0,#6fb3fb 46%,#3998fd 50%);border-top:1px solid rgba(30,110,210,0.45);"></div>
<span class="t" style="left:13.4px;top:216.26px;font-size:8.8px;font-weight:bold;color:#fff;transform:scaleX(0.900);">8</span>
<div style="left:4px;top:225.62px;width:23.6px;height:12.12px;background:linear-gradient(90deg,#78b8fb 0,#6fb3fb 46%,#3998fd 50%);border-top:1px solid rgba(30,110,210,0.45);"></div>
<span class="t" style="left:13.4px;top:228.37px;font-size:8.8px;font-weight:bold;color:#fff;transform:scaleX(0.900);">9</span>
<div style="left:4px;top:237.73px;width:23.6px;height:12.12px;background:linear-gradient(90deg,#78b8fb 0,#6fb3fb 46%,#3998fd 50%);border-top:1px solid rgba(30,110,210,0.45);"></div>
<span class="t" style="left:11.2px;top:240.49px;font-size:8.8px;font-weight:bold;color:#fff;transform:scaleX(0.900);">10</span>
<div style="left:4px;top:249.85px;width:23.6px;height:12.12px;background:linear-gradient(90deg,#78b8fb 0,#6fb3fb 46%,#3998fd 50%);border-top:1px solid rgba(30,110,210,0.45);"></div>
<span class="t" style="left:11.41px;top:252.6px;font-size:8.8px;font-weight:bold;color:#fff;transform:scaleX(0.900);">11</span>
<div style="left:4px;top:261.97px;width:23.6px;height:12.12px;background:linear-gradient(90deg,#78b8fb 0,#6fb3fb 46%,#3998fd 50%);border-top:1px solid rgba(30,110,210,0.45);"></div>
<span class="t" style="left:11.2px;top:264.72px;font-size:8.8px;font-weight:bold;color:#fff;transform:scaleX(0.900);">12</span>
<div style="left:4px;top:274.08px;width:23.6px;height:12.12px;background:linear-gradient(90deg,#78b8fb 0,#6fb3fb 46%,#3998fd 50%);border-top:1px solid rgba(30,110,210,0.45);"></div>
<span class="t" style="left:11.2px;top:276.83px;font-size:8.8px;font-weight:bold;color:#fff;transform:scaleX(0.900);">13</span>
<div style="left:4px;top:286.19px;width:23.6px;height:12.12px;background:linear-gradient(90deg,#78b8fb 0,#6fb3fb 46%,#3998fd 50%);border-top:1px solid rgba(30,110,210,0.45);"></div>
<span class="t" style="left:11.2px;top:288.95px;font-size:8.8px;font-weight:bold;color:#fff;transform:scaleX(0.900);">14</span>
<div style="left:4px;top:298.31px;width:23.6px;height:12.12px;background:linear-gradient(90deg,#78b8fb 0,#6fb3fb 46%,#3998fd 50%);border-top:1px solid rgba(30,110,210,0.45);"></div>
<span class="t" style="left:11.2px;top:301.06px;font-size:8.8px;font-weight:bold;color:#fff;transform:scaleX(0.900);">15</span>
<div style="left:4px;top:310.42px;width:23.6px;height:12.12px;background:linear-gradient(90deg,#78b8fb 0,#6fb3fb 46%,#3998fd 50%);border-top:1px solid rgba(30,110,210,0.45);"></div>
<span class="t" style="left:11.2px;top:313.18px;font-size:8.8px;font-weight:bold;color:#fff;transform:scaleX(0.900);">16</span>
<div style="left:4px;top:322.54px;width:23.6px;height:12.12px;background:linear-gradient(90deg,#78b8fb 0,#6fb3fb 46%,#3998fd 50%);border-top:1px solid rgba(30,110,210,0.45);"></div>
<span class="t" style="left:11.2px;top:325.29px;font-size:8.8px;font-weight:bold;color:#fff;transform:scaleX(0.900);">17</span>
<div style="left:4px;top:334.65px;width:23.6px;height:12.12px;background:linear-gradient(90deg,#78b8fb 0,#6fb3fb 46%,#3998fd 50%);border-top:1px solid rgba(30,110,210,0.45);"></div>
<span class="t" style="left:11.2px;top:337.41px;font-size:8.8px;font-weight:bold;color:#fff;transform:scaleX(0.900);">18</span>
<div style="left:4px;top:346.77px;width:23.6px;height:12.12px;background:linear-gradient(90deg,#78b8fb 0,#6fb3fb 46%,#3998fd 50%);border-top:1px solid rgba(30,110,210,0.45);"></div>
<span class="t" style="left:11.2px;top:349.52px;font-size:8.8px;font-weight:bold;color:#fff;transform:scaleX(0.900);">19</span>
<div style="left:4px;top:358.88px;width:23.6px;height:12.12px;background:linear-gradient(90deg,#78b8fb 0,#6fb3fb 46%,#3998fd 50%);border-top:1px solid rgba(30,110,210,0.45);"></div>
<span class="t" style="left:11.2px;top:361.64px;font-size:8.8px;font-weight:bold;color:#fff;transform:scaleX(0.900);">20</span>
<div style="left:4px;top:371px;width:23.6px;height:12.12px;background:linear-gradient(90deg,#78b8fb 0,#6fb3fb 46%,#3998fd 50%);border-top:1px solid rgba(30,110,210,0.45);"></div>
<span class="t" style="left:11.2px;top:373.75px;font-size:8.8px;font-weight:bold;color:#fff;transform:scaleX(0.900);">21</span>
<div style="left:4px;top:383.12px;width:23.6px;height:12.12px;background:linear-gradient(90deg,#78b8fb 0,#6fb3fb 46%,#3998fd 50%);border-top:1px solid rgba(30,110,210,0.45);"></div>
<span class="t" style="left:11.2px;top:385.87px;font-size:8.8px;font-weight:bold;color:#fff;transform:scaleX(0.900);">22</span>
<div style="left:4px;top:395.23px;width:23.6px;height:12.12px;background:linear-gradient(90deg,#78b8fb 0,#6fb3fb 46%,#3998fd 50%);border-top:1px solid rgba(30,110,210,0.45);"></div>
<span class="t" style="left:11.2px;top:397.98px;font-size:8.8px;font-weight:bold;color:#fff;transform:scaleX(0.900);">23</span>
<div style="left:4px;top:407.34px;width:23.6px;height:12.12px;background:linear-gradient(90deg,#78b8fb 0,#6fb3fb 46%,#3998fd 50%);border-top:1px solid rgba(30,110,210,0.45);"></div>
<span class="t" style="left:11.2px;top:410.1px;font-size:8.8px;font-weight:bold;color:#fff;transform:scaleX(0.900);">24</span>
<div style="left:4px;top:419.46px;width:23.6px;height:12.12px;background:linear-gradient(90deg,#78b8fb 0,#6fb3fb 46%,#3998fd 50%);border-top:1px solid rgba(30,110,210,0.45);"></div>
<span class="t" style="left:11.2px;top:422.21px;font-size:8.8px;font-weight:bold;color:#fff;transform:scaleX(0.900);">25</span>
<div style="left:4px;top:431.57px;width:23.6px;height:12.12px;background:linear-gradient(90deg,#78b8fb 0,#6fb3fb 46%,#3998fd 50%);border-top:1px solid rgba(30,110,210,0.45);"></div>
<span class="t" style="left:11.2px;top:434.33px;font-size:8.8px;font-weight:bold;color:#fff;transform:scaleX(0.900);">26</span>
<div style="left:4px;top:443.69px;width:23.6px;height:12.12px;background:linear-gradient(90deg,#78b8fb 0,#6fb3fb 46%,#3998fd 50%);border-top:1px solid rgba(30,110,210,0.45);"></div>
<span class="t" style="left:11.2px;top:446.44px;font-size:8.8px;font-weight:bold;color:#fff;transform:scaleX(0.900);">27</span>
<div style="left:4px;top:455.81px;width:23.6px;height:12.12px;background:linear-gradient(90deg,#78b8fb 0,#6fb3fb 46%,#3998fd 50%);border-top:1px solid rgba(30,110,210,0.45);"></div>
<span class="t" style="left:11.2px;top:458.56px;font-size:8.8px;font-weight:bold;color:#fff;transform:scaleX(0.900);">28</span>
<div style="left:4px;top:467.92px;width:23.6px;height:12.12px;background:linear-gradient(90deg,#78b8fb 0,#6fb3fb 46%,#3998fd 50%);border-top:1px solid rgba(30,110,210,0.45);"></div>
<span class="t" style="left:11.2px;top:470.67px;font-size:8.8px;font-weight:bold;color:#fff;transform:scaleX(0.900);">29</span>
<div style="left:4px;top:480.03px;width:23.6px;height:12.12px;background:linear-gradient(90deg,#f6f6f6 0,#f4f4f4 46%,#ededed 50%);border-top:1px solid #b2b2b2;"></div>
<span class="t" style="left:11.2px;top:482.79px;font-size:8.8px;color:#111;transform:scaleX(0.900);">30</span>
<div style="left:4px;top:492.15px;width:23.6px;height:3.85px;background:linear-gradient(90deg,#f6f6f6 0,#f4f4f4 46%,#ededed 50%);border-top:1px solid #b2b2b2;"></div>
<div style="left:27.3px;top:115.5px;width:0.8px;height:380.5px;background:#8a8a8a;"></div>
<div style="left:27.6px;top:140.31px;width:974.4px;height:1px;background:#d2d2d2;"></div>
<div style="left:27.6px;top:152.43px;width:974.4px;height:1px;background:#d2d2d2;"></div>
<div style="left:27.6px;top:164.54px;width:974.4px;height:1px;background:#b1cbe7;"></div>
<div style="left:27.6px;top:176.66px;width:974.4px;height:1px;background:#b1cbe7;"></div>
<div style="left:27.6px;top:188.77px;width:974.4px;height:1px;background:#b1cbe7;"></div>
<div style="left:27.6px;top:200.89px;width:974.4px;height:1px;background:#b1cbe7;"></div>
<div style="left:27.6px;top:213px;width:974.4px;height:1px;background:#b1cbe7;"></div>
<div style="left:27.6px;top:225.12px;width:974.4px;height:1px;background:#b1cbe7;"></div>
<div style="left:27.6px;top:237.23px;width:974.4px;height:1px;background:#b1cbe7;"></div>
<div style="left:27.6px;top:249.35px;width:974.4px;height:1px;background:#b1cbe7;"></div>
<div style="left:27.6px;top:261.47px;width:974.4px;height:1px;background:#b1cbe7;"></div>
<div style="left:27.6px;top:273.58px;width:974.4px;height:1px;background:#b1cbe7;"></div>
<div style="left:27.6px;top:285.69px;width:974.4px;height:1px;background:#b1cbe7;"></div>
<div style="left:27.6px;top:297.81px;width:974.4px;height:1px;background:#b1cbe7;"></div>
<div style="left:27.6px;top:309.92px;width:974.4px;height:1px;background:#b1cbe7;"></div>
<div style="left:27.6px;top:322.04px;width:974.4px;height:1px;background:#b1cbe7;"></div>
<div style="left:27.6px;top:334.15px;width:974.4px;height:1px;background:#b1cbe7;"></div>
<div style="left:27.6px;top:346.27px;width:974.4px;height:1px;background:#b1cbe7;"></div>
<div style="left:27.6px;top:358.38px;width:974.4px;height:1px;background:#b1cbe7;"></div>
<div style="left:27.6px;top:370.5px;width:974.4px;height:1px;background:#b1cbe7;"></div>
<div style="left:27.6px;top:382.62px;width:974.4px;height:1px;background:#b1cbe7;"></div>
<div style="left:27.6px;top:394.73px;width:974.4px;height:1px;background:#b1cbe7;"></div>
<div style="left:27.6px;top:406.84px;width:974.4px;height:1px;background:#b1cbe7;"></div>
<div style="left:27.6px;top:418.96px;width:974.4px;height:1px;background:#b1cbe7;"></div>
<div style="left:27.6px;top:431.07px;width:974.4px;height:1px;background:#b1cbe7;"></div>
<div style="left:27.6px;top:443.19px;width:974.4px;height:1px;background:#b1cbe7;"></div>
<div style="left:27.6px;top:455.31px;width:974.4px;height:1px;background:#b1cbe7;"></div>
<div style="left:27.6px;top:467.42px;width:974.4px;height:1px;background:#b1cbe7;"></div>
<div style="left:27.6px;top:479.53px;width:974.4px;height:1px;background:#d2d2d2;"></div>
<div style="left:27.6px;top:491.65px;width:974.4px;height:1px;background:#d2d2d2;"></div>
<div style="left:124.8px;top:128.7px;width:1px;height:24.23px;background:#d2d2d2;"></div>
<div style="left:124.8px;top:152.93px;width:1px;height:327.11px;background:#b1cbe7;"></div>
<div style="left:124.8px;top:480.03px;width:1px;height:15.97px;background:#d2d2d2;"></div>
<div style="left:284.6px;top:128.7px;width:1px;height:24.23px;background:#d2d2d2;"></div>
<div style="left:284.6px;top:152.93px;width:1px;height:327.11px;background:#b1cbe7;"></div>
<div style="left:284.6px;top:480.03px;width:1px;height:15.97px;background:#d2d2d2;"></div>
<div style="left:750.5px;top:128.7px;width:1px;height:24.23px;background:#d2d2d2;"></div>
<div style="left:750.5px;top:152.93px;width:1px;height:327.11px;background:#b1cbe7;"></div>
<div style="left:750.5px;top:480.03px;width:1px;height:15.97px;background:#d2d2d2;"></div>
<div style="left:809px;top:128.7px;width:1px;height:24.23px;background:#d2d2d2;"></div>
<div style="left:809px;top:152.93px;width:1px;height:327.11px;background:#b1cbe7;"></div>
<div style="left:809px;top:480.03px;width:1px;height:15.97px;background:#d2d2d2;"></div>
<div style="left:867.8px;top:128.7px;width:1px;height:24.23px;background:#d2d2d2;"></div>
<div style="left:867.8px;top:152.93px;width:1px;height:327.11px;background:#b1cbe7;"></div>
<div style="left:867.8px;top:480.03px;width:1px;height:15.97px;background:#d2d2d2;"></div>
<div style="left:925.8px;top:128.7px;width:1px;height:24.23px;background:#d2d2d2;"></div>
<div style="left:925.8px;top:152.93px;width:1px;height:327.11px;background:#b1cbe7;"></div>
<div style="left:925.8px;top:480.03px;width:1px;height:15.97px;background:#d2d2d2;"></div>
<div style="left:985.1px;top:128.7px;width:1px;height:24.23px;background:#d2d2d2;"></div>
<div style="left:985.1px;top:152.93px;width:1px;height:327.11px;background:#b1cbe7;"></div>
<div style="left:985.1px;top:480.03px;width:1px;height:15.97px;background:#d2d2d2;"></div>
<div style="left:28px;top:153px;width:974.4px;height:1px;background:#2c62f2;"></div>
<div style="left:28px;top:480px;width:974.4px;height:1px;background:#2c62f2;"></div>
<div style="left:27.9px;top:152.93px;width:1.2px;height:327.11px;background:#2a5cf0;"></div>
<div style="left:27.6px;top:467.52px;width:98.2px;height:13.02px;border:1px solid #111;"></div>
<span class="t" style="left:28.8px;top:142.73px;font-size:9.9px;font-weight:bold;color:#1a1a1a;transform:scaleX(0.960);">Vehicle</span>
<span class="t" style="left:126.5px;top:142.73px;font-size:9.9px;font-weight:bold;color:#1a1a1a;transform:scaleX(0.960);">Number</span>
<span class="t" style="left:286.3px;top:142.73px;font-size:9.9px;font-weight:bold;color:#1a1a1a;transform:scaleX(0.960);">Notes</span>
<span class="t" style="left:28.8px;top:154.85px;font-size:9.9px;color:#1a1a1a;transform:scaleX(0.960);">Truck</span>
<span class="t" style="left:126.5px;top:154.85px;font-size:9.9px;color:#1a1a1a;transform:scaleX(0.960);">12</span>
<span class="t" style="left:286.3px;top:154.85px;font-size:9.9px;color:#1a1a1a;transform:scaleX(0.960);">Minor</span>
<span class="t" style="left:28.8px;top:166.96px;font-size:9.9px;color:#1a1a1a;transform:scaleX(0.960);">Truck</span>
<span class="t" style="left:126.5px;top:166.96px;font-size:9.9px;color:#1a1a1a;transform:scaleX(0.960);">19</span>
<span class="t" style="left:286.3px;top:166.96px;font-size:9.9px;color:#1a1a1a;transform:scaleX(0.960);">Back</span>
<span class="t" style="left:28.8px;top:179.08px;font-size:9.9px;color:#1a1a1a;transform:scaleX(0.960);">Car</span>
<span class="t" style="left:126.5px;top:179.08px;font-size:9.9px;color:#1a1a1a;transform:scaleX(0.960);">23</span>
<span class="t" style="left:286.3px;top:179.08px;font-size:9.9px;color:#1a1a1a;transform:scaleX(0.960);">Left t</span>
<span class="t" style="left:28.8px;top:191.19px;font-size:9.9px;color:#1a1a1a;transform:scaleX(0.960);">Car</span>
<span class="t" style="left:126.5px;top:191.19px;font-size:9.9px;color:#1a1a1a;transform:scaleX(0.960);">8</span>
<span class="t" style="left:286.3px;top:191.19px;font-size:9.9px;color:#1a1a1a;transform:scaleX(0.960);">No da</span>
<span class="t" style="left:28.8px;top:203.31px;font-size:9.9px;color:#1a1a1a;transform:scaleX(0.960);">Van</span>
<span class="t" style="left:126.5px;top:203.31px;font-size:9.9px;color:#1a1a1a;transform:scaleX(0.960);">31</span>
<span class="t" style="left:286.3px;top:203.31px;font-size:9.9px;color:#1a1a1a;transform:scaleX(0.960);">Stain</span>
<div style="left:1002px;top:115.5px;width:12.3px;height:380.5px;background:#f0f0f0;"></div>
<div style="left:1002px;top:116.2px;width:12.3px;height:3px;background:#a6a6a6;"></div>
<div style="left:1004.2px;top:116.6px;width:7px;height:1.9px;background:#222;border-radius:1px;"></div>
<svg style="left:1005.9px;top:124.2px" width="4.6" height="3" viewBox="0 0 4.6 3"><path d="M0 2.8L2.3 0L4.6 2.8Z" fill="#444"/></svg>
<div style="left:1003.2px;top:132.2px;width:9.4px;height:167px;border:1px solid #b2b2b2;border-radius:2px;background:linear-gradient(90deg,#f6f6f6,#e2e2e2 50%,#cfcfcf);"></div>
<div style="left:1005.5px;top:214.2px;width:4.5px;height:0.8px;background:#777;"></div>
<div style="left:1005.5px;top:215.8px;width:4.5px;height:0.8px;background:#777;"></div>
<div style="left:1005.5px;top:217.4px;width:4.5px;height:0.8px;background:#777;"></div>
<svg style="left:1005.9px;top:488.8px" width="4.6" height="3" viewBox="0 0 4.6 3"><path d="M0 0L2.3 2.8L4.6 0Z" fill="#444"/></svg>
<div style="left:1014.3px;top:95.8px;width:0.8px;height:424.2px;background:#dcdcdc;"></div>
<div style="left:1015px;top:95.8px;width:4.5px;height:424.2px;background:#f4f4f4;"></div>
<div style="left:1013.2px;top:281px;width:5.3px;height:52px;background:#6a6a6a;"></div>
<svg style="left:1014px;top:304.5px" width="4" height="5" viewBox="0 0 4 5"><path d="M3.4 0.3L0.6 2.5L3.4 4.7Z" fill="#fff"/></svg>
<div style="left:4px;top:496px;width:1010.3px;height:24.5px;background:#f0f0f0;"></div>
<svg style="left:8.5px;top:499.8px" width="3" height="4.6" viewBox="0 0 3 4.6"><path d="M2.8 0L0 2.3L2.8 4.6Z" fill="#555"/></svg>
<div style="left:16px;top:497.4px;width:422px;height:10.2px;border:1px solid #a8a8a8;border-radius:2px;background:linear-gradient(#f6f6f6,#e2e2e2 45%,#c8c8c8);"></div>
<div style="left:224.6px;top:500px;width:0.9px;height:5px;background:#666;"></div>
<div style="left:226.6px;top:500px;width:0.9px;height:5px;background:#666;"></div>
<div style="left:228.6px;top:500px;width:0.9px;height:5px;background:#666;"></div>
<svg style="left:990.8px;top:499.6px" width="3" height="4.6" viewBox="0 0 3 4.6"><path d="M0 0L2.8 2.3L0 4.6Z" fill="#555"/></svg>
<svg style="left:997px;top:496px" width="6" height="12" viewBox="0 0 6 12"><rect x="0.9" y="0.4" width="4.1" height="11.2" fill="#a4a4a4"/><rect x="1.5" y="1.8" width="2.9" height="8.4" fill="#262626"/><rect x="2.75" y="2.8" width="0.45" height="6.4" fill="#8a8a8a"/></svg>
<svg style="left:11px;top:510.5px" width="62" height="8" viewBox="0 0 62 8"><path d="M2.4 0.5V7.5" stroke="#111" stroke-width="1.3"/><path d="M6.4 0.5L2.8 4L6.4 7.5Z" fill="#111"/><path d="M17.8 0.5L13.8 4L17.8 7.5Z" fill="#111"/><path d="M26 0.5L30 4L26 7.5Z" fill="#111"/><path d="M37.4 0.5L41 4L37.4 7.5Z" fill="#111"/><path d="M41.6 0.5V7.5" stroke="#111" stroke-width="1.3"/><path d="M53.2 4H59.6M56.4 0.9V7.1" stroke="#111" stroke-width="1.9"/></svg>
<div style="left:78px;top:508px;width:44.6px;height:12.5px;background:#fff;border:1px solid #b0b0b0;border-top:none;"></div>
<span class="t" style="left:86.3px;top:510.58px;font-size:9px;font-weight:bold;color:#111;transform:scaleX(0.901);">Sheet1</span>
<div style="left:4px;top:519.7px;width:1015.5px;height:16.1px;background:#f0f0f0;border-top:1.1px solid #c8c8c8;"></div>
<span class="t" style="left:12px;top:525.21px;font-size:9.2px;color:#222;transform:scaleX(0.867);">Sheet 1 of 1</span>
<div style="left:133.3px;top:523px;width:0.8px;height:11.5px;background:#bdbdbd;"></div>
<span class="t" style="left:140.5px;top:525.21px;font-size:9.2px;color:#222;transform:scaleX(0.886);">27 rows, 1024 columns selected</span>
<span class="t" style="left:759.4px;top:525.21px;font-size:9.2px;color:#222;transform:scaleX(0.861);">Average: 18.6; Sum: 93</span>
<div style="left:883px;top:523px;width:0.8px;height:11.5px;background:#bdbdbd;"></div>
<div style="left:890.5px;top:528.2px;width:7px;height:1.2px;background:#444;"></div>
<div style="left:901.8px;top:528.5px;width:69.6px;height:0.8px;background:#555;"></div>
<div style="left:934.4px;top:525.3px;width:2px;height:7px;background:#444;"></div>
<div style="left:974.3px;top:528.2px;width:7px;height:1.2px;background:#444;"></div>
<div style="left:977.2px;top:525.3px;width:1.2px;height:7px;background:#444;"></div>
<div style="left:986px;top:523px;width:0.8px;height:11.5px;background:#bdbdbd;"></div>
<span class="t" style="left:992.2px;top:525.47px;font-size:8.9px;color:#222;transform:scaleX(0.896);">100%</span>
<div style="left:308.2px;top:114.1px;width:460.2px;height:426.5px;background:#d8e2ee;border:1px solid #727b88;border-bottom:1.6px solid #555c66;border-radius:3.5px 3.5px 0 0;"></div>
<div style="left:309.2px;top:115.1px;width:458.2px;height:17.7px;background:linear-gradient(#e3eaf3 0,#c4d2e5 10%,#cbd8e8 45%,#d7e2ef 100%);border-radius:3px 3px 0 0;"></div>
<span class="t" style="left:313.7px;top:120.01px;font-size:9.2px;color:#63676e;transform:scaleX(0.928);">Conditional Formatting for A3:AMJ29</span>
<div style="left:743.4px;top:118.2px;width:21.4px;height:11.4px;border:1px solid #8c99ab;border-radius:2px;background:linear-gradient(#dce5f0,#cad6e5);"></div>
<svg style="left:749.6px;top:120.4px" width="9" height="7" viewBox="0 0 9 7"><path d="M1.5 1L7.5 6M7.5 1L1.5 6" stroke="#6b7482" stroke-width="2.7"/><path d="M1.5 1L7.5 6M7.5 1L1.5 6" stroke="#fff" stroke-width="1.2"/></svg>
<div style="left:310.6px;top:132px;width:455px;height:406.4px;background:#f0f0f0;"></div>
<span class="t" style="left:316px;top:139.51px;font-size:9.2px;font-weight:bold;color:#111;transform:scaleX(0.864);">Conditions</span>
<div style="left:316.2px;top:153px;width:443.6px;height:348.8px;background:#b9cde6;border:1px solid #4a6278;border-top-color:#5d6b7c;border-right:1.5px solid #2f7a96;border-bottom:1.4px solid #2f7a96;border-radius:3.5px 3.5px 0 0;"></div>
<div style="left:317.2px;top:154px;width:441.6px;height:16.4px;background:linear-gradient(#d2deed 0,#adc3df 14%,#a6bddc 55%,#b4c8e2 100%);border-radius:3px 3px 0 0;"></div>
<span class="t" style="left:321px;top:158.21px;font-size:9.2px;color:#111;transform:scaleX(0.875);">Cell Style</span>
<div style="left:734.6px;top:156.2px;width:22px;height:12.3px;border:1px solid #6b352d;border-radius:2.5px;background:linear-gradient(#e4b0a2 0,#d68b78 42%,#c5523a 50%,#bd442b 75%,#d2694c 100%);box-shadow:inset 0 0 0 0.6px rgba(255,220,210,0.55);"></div>
<svg style="left:740.8px;top:159px" width="10" height="7" viewBox="0 0 10 7"><path d="M2 1.2L8 5.8M8 1.2L2 5.8" stroke="#6a2a20" stroke-width="3"/><path d="M2 1.2L8 5.8M8 1.2L2 5.8" stroke="#fff" stroke-width="1.7"/></svg>
<div style="left:318.7px;top:170.2px;width:438.8px;height:329.4px;background:#f0f0f0;"></div>
<div style="left:323.4px;top:193px;width:427.6px;height:263.8px;background:#fff;border:1px solid #b9b9b9;"></div>
<div style="left:325px;top:177.8px;width:40.7px;height:15.5px;background:linear-gradient(#f3f3f3,#e6e6e6);border:1px solid #b0b0b0;border-bottom:none;"></div>
<span class="t" style="left:326.9px;top:182.01px;font-size:9.2px;color:#111;transform:scaleX(0.891);">Organizer</span>
<div style="left:364.8px;top:177.8px;width:39.3px;height:15.5px;background:linear-gradient(#f3f3f3,#e6e6e6);border:1px solid #b0b0b0;border-bottom:none;"></div>
<span class="t" style="left:368px;top:182.01px;font-size:9.2px;color:#111;transform:scaleX(0.882);">Numbers</span>
<div style="left:403.3px;top:177.8px;width:22.1px;height:15.5px;background:linear-gradient(#f3f3f3,#e6e6e6);border:1px solid #b0b0b0;border-bottom:none;"></div>
<span class="t" style="left:406.2px;top:182.01px;font-size:9.2px;color:#111;transform:scaleX(0.885);">Font</span>
<div style="left:424.6px;top:177.8px;width:49.8px;height:15.5px;background:linear-gradient(#f3f3f3,#e6e6e6);border:1px solid #b0b0b0;border-bottom:none;"></div>
<span class="t" style="left:427.3px;top:182.01px;font-size:9.2px;color:#111;transform:scaleX(0.893);">Font Effects</span>
<div style="left:473.6px;top:177.8px;width:43.6px;height:15.5px;background:linear-gradient(#f3f3f3,#e6e6e6);border:1px solid #b0b0b0;border-bottom:none;"></div>
<span class="t" style="left:476.1px;top:182.01px;font-size:9.2px;color:#111;transform:scaleX(0.939);">Alignment</span>
<div style="left:516.4px;top:177.8px;width:33.6px;height:15.5px;background:linear-gradient(#f3f3f3,#e6e6e6);border:1px solid #b0b0b0;border-bottom:none;"></div>
<span class="t" style="left:519.1px;top:182.01px;font-size:9.2px;color:#111;transform:scaleX(0.875);">Borders</span>
<div style="left:549.2px;top:176px;width:52.8px;height:18px;background:#fff;border:1px solid #b0b0b0;border-bottom:none;"></div>
<span class="t" style="left:551.6px;top:180.41px;font-size:9.2px;color:#111;transform:scaleX(0.914);">Background</span>
<div style="left:601.4px;top:177.8px;width:59.4px;height:15.5px;background:linear-gradient(#f3f3f3,#e6e6e6);border:1px solid #b0b0b0;border-bottom:none;"></div>
<span class="t" style="left:602.1px;top:182.01px;font-size:9.2px;color:#111;transform:scaleX(0.903);">Cell Protection</span>
<span class="t" style="left:330.3px;top:201.51px;font-size:9.2px;font-weight:bold;color:#111;transform:scaleX(0.879);">Background Color</span>
<div style="left:340px;top:215.2px;width:248.3px;height:12.6px;background:#fff;border:1px solid #cdcdcd;border-radius:1.5px;"></div>
<span class="t" style="left:342.3px;top:219.11px;font-size:9.2px;color:#111;transform:scaleX(0.940);">No Fill</span>
<div style="left:339.3px;top:228px;width:249.6px;height:222.5px;background:#f0f0f0;"></div>
<div style="left:340.5px;top:230.1px;width:18.3px;height:10px;background:#000000;border:1px solid rgba(150,150,150,0.38);border-radius:1.5px;"></div>
<div style="left:361.22px;top:230.1px;width:18.3px;height:10px;background:#111111;border:1px solid rgba(150,150,150,0.38);border-radius:1.5px;"></div>
<div style="left:381.94px;top:230.1px;width:18.3px;height:10px;background:#1C1C1C;border:1px solid rgba(150,150,150,0.38);border-radius:1.5px;"></div>
<div style="left:402.66px;top:230.1px;width:18.3px;height:10px;background:#333333;border:1px solid rgba(150,150,150,0.38);border-radius:1.5px;"></div>
<div style="left:423.38px;top:230.1px;width:18.3px;height:10px;background:#666666;border:1px solid rgba(150,150,150,0.38);border-radius:1.5px;"></div>
<div style="left:444.1px;top:230.1px;width:18.3px;height:10px;background:#808080;border:1px solid rgba(150,150,150,0.38);border-radius:1.5px;"></div>
<div style="left:464.82px;top:230.1px;width:18.3px;height:10px;background:#999999;border:1px solid rgba(150,150,150,0.38);border-radius:1.5px;"></div>
<div style="left:485.54px;top:230.1px;width:18.3px;height:10px;background:#B2B2B2;border:1px solid rgba(150,150,150,0.38);border-radius:1.5px;"></div>
<div style="left:506.26px;top:230.1px;width:18.3px;height:10px;background:#CCCCCC;border:1px solid rgba(150,150,150,0.38);border-radius:1.5px;"></div>
<div style="left:526.98px;top:230.1px;width:18.3px;height:10px;background:#DDDDDD;border:1px solid rgba(150,150,150,0.38);border-radius:1.5px;"></div>
<div style="left:547.7px;top:230.1px;width:18.3px;height:10px;background:#EEEEEE;border:1px solid rgba(150,150,150,0.38);border-radius:1.5px;"></div>
<div style="left:568.42px;top:230.1px;width:18.3px;height:10px;background:#FFFFFF;border:1px solid rgba(150,150,150,0.38);border-radius:1.5px;"></div>
<div style="left:340.5px;top:242.21px;width:18.3px;height:10px;background:#FFFF00;border:1px solid rgba(150,150,150,0.38);border-radius:1.5px;"></div>
<div style="left:361.22px;top:242.21px;width:18.3px;height:10px;background:#FFBF00;border:1px solid rgba(150,150,150,0.38);border-radius:1.5px;"></div>
<div style="left:381.94px;top:242.21px;width:18.3px;height:10px;background:#FF8000;border:1px solid rgba(150,150,150,0.38);border-radius:1.5px;"></div>
<div style="left:402.66px;top:242.21px;width:18.3px;height:10px;background:#FF4000;border:1px solid rgba(150,150,150,0.38);border-radius:1.5px;"></div>
<div style="left:423.38px;top:242.21px;width:18.3px;height:10px;background:#FF0000;border:1px solid rgba(150,150,150,0.38);border-radius:1.5px;"></div>
<div style="left:444.1px;top:242.21px;width:18.3px;height:10px;background:#BF0041;border:1px solid rgba(150,150,150,0.38);border-radius:1.5px;"></div>
<div style="left:464.82px;top:242.21px;width:18.3px;height:10px;background:#800080;border:1px solid rgba(150,150,150,0.38);border-radius:1.5px;"></div>
<div style="left:485.54px;top:242.21px;width:18.3px;height:10px;background:#55308D;border:1px solid rgba(150,150,150,0.38);border-radius:1.5px;"></div>
<div style="left:506.26px;top:242.21px;width:18.3px;height:10px;background:#2A6099;border:1px solid rgba(150,150,150,0.38);border-radius:1.5px;"></div>
<div style="left:526.98px;top:242.21px;width:18.3px;height:10px;background:#158466;border:1px solid rgba(150,150,150,0.38);border-radius:1.5px;"></div>
<div style="left:547.7px;top:242.21px;width:18.3px;height:10px;background:#00A933;border:1px solid rgba(150,150,150,0.38);border-radius:1.5px;"></div>
<div style="left:568.42px;top:242.21px;width:18.3px;height:10px;background:#81D41A;border:1px solid rgba(150,150,150,0.38);border-radius:1.5px;"></div>
<div style="left:340.5px;top:254.32px;width:18.3px;height:10px;background:#FFFFD7;border:1px solid rgba(150,150,150,0.38);border-radius:1.5px;"></div>
<div style="left:361.22px;top:254.32px;width:18.3px;height:10px;background:#FFF5CE;border:1px solid rgba(150,150,150,0.38);border-radius:1.5px;"></div>
<div style="left:381.94px;top:254.32px;width:18.3px;height:10px;background:#FFDBB6;border:1px solid rgba(150,150,150,0.38);border-radius:1.5px;"></div>
<div style="left:402.66px;top:254.32px;width:18.3px;height:10px;background:#FFD8CE;border:1px solid rgba(150,150,150,0.38);border-radius:1.5px;"></div>
<div style="left:423.38px;top:254.32px;width:18.3px;height:10px;background:#FFD7D7;border:1px solid rgba(150,150,150,0.38);border-radius:1.5px;"></div>
<div style="left:444.1px;top:254.32px;width:18.3px;height:10px;background:#F7D1D5;border:1px solid rgba(150,150,150,0.38);border-radius:1.5px;"></div>
<div style="left:464.82px;top:254.32px;width:18.3px;height:10px;background:#E0C2CD;border:1px solid rgba(150,150,150,0.38);border-radius:1.5px;"></div>
<div style="left:485.54px;top:254.32px;width:18.3px;height:10px;background:#DEDCE6;border:1px solid rgba(150,150,150,0.38);border-radius:1.5px;"></div>
<div style="left:506.26px;top:254.32px;width:18.3px;height:10px;background:#DEE6EF;border:1px solid rgba(150,150,150,0.38);border-radius:1.5px;"></div>
<div style="left:526.98px;top:254.32px;width:18.3px;height:10px;background:#DEE7E5;border:1px solid rgba(150,150,150,0.38);border-radius:1.5px;"></div>
<div style="left:547.7px;top:254.32px;width:18.3px;height:10px;background:#DDE8CB;border:1px solid rgba(150,150,150,0.38);border-radius:1.5px;"></div>
<div style="left:568.42px;top:254.32px;width:18.3px;height:10px;background:#F6F9D4;border:1px solid rgba(150,150,150,0.38);border-radius:1.5px;"></div>
<div style="left:340.5px;top:266.43px;width:18.3px;height:10px;background:#FFFFA6;border:1px solid rgba(150,150,150,0.38);border-radius:1.5px;"></div>
<div style="left:361.22px;top:266.43px;width:18.3px;height:10px;background:#FFE994;border:1px solid rgba(150,150,150,0.38);border-radius:1.5px;"></div>
<div style="left:381.94px;top:266.43px;width:18.3px;height:10px;background:#FFB66C;border:1px solid rgba(150,150,150,0.38);border-radius:1.5px;"></div>
<div style="left:402.66px;top:266.43px;width:18.3px;height:10px;background:#FFAA95;border:1px solid rgba(150,150,150,0.38);border-radius:1.5px;"></div>
<div style="left:423.38px;top:266.43px;width:18.3px;height:10px;background:#FFA6A6;border:1px solid rgba(150,150,150,0.38);border-radius:1.5px;"></div>
<div style="left:444.1px;top:266.43px;width:18.3px;height:10px;background:#EC9BA4;border:1px solid rgba(150,150,150,0.38);border-radius:1.5px;"></div>
<div style="left:464.82px;top:266.43px;width:18.3px;height:10px;background:#BF819E;border:1px solid rgba(150,150,150,0.38);border-radius:1.5px;"></div>
<div style="left:485.54px;top:266.43px;width:18.3px;height:10px;background:#B7B3CA;border:1px solid rgba(150,150,150,0.38);border-radius:1.5px;"></div>
<div style="left:506.26px;top:266.43px;width:18.3px;height:10px;background:#B4C7DC;border:1px solid rgba(150,150,150,0.38);border-radius:1.5px;"></div>
<div style="left:526.98px;top:266.43px;width:18.3px;height:10px;background:#B3CAC7;border:1px solid rgba(150,150,150,0.38);border-radius:1.5px;"></div>
<div style="left:547.7px;top:266.43px;width:18.3px;height:10px;background:#AFD095;border:1px solid rgba(150,150,150,0.38);border-radius:1.5px;"></div>
<div style="left:568.42px;top:266.43px;width:18.3px;height:10px;background:#E8F2A1;border:1px solid rgba(150,150,150,0.38);border-radius:1.5px;"></div>
<div style="left:340.5px;top:278.54px;width:18.3px;height:10px;background:#FFFF6D;border:1px solid rgba(150,150,150,0.38);border-radius:1.5px;"></div>
<div style="left:361.22px;top:278.54px;width:18.3px;height:10px;background:#FFDE59;border:1px solid rgba(150,150,150,0.38);border-radius:1.5px;"></div>
<div style="left:381.94px;top:278.54px;width:18.3px;height:10px;background:#FF972F;border:1px solid rgba(150,150,150,0.38);border-radius:1.5px;"></div>
<div style="left:402.66px;top:278.54px;width:18.3px;height:10px;background:#FF7B59;border:1px solid rgba(150,150,150,0.38);border-radius:1.5px;"></div>
<div style="left:423.38px;top:278.54px;width:18.3px;height:10px;background:#FF6D6D;border:1px solid rgba(150,150,150,0.38);border-radius:1.5px;"></div>
<div style="left:444.1px;top:278.54px;width:18.3px;height:10px;background:#E16173;border:1px solid rgba(150,150,150,0.38);border-radius:1.5px;"></div>
<div style="left:464.82px;top:278.54px;width:18.3px;height:10px;background:#A1467E;border:1px solid rgba(150,150,150,0.38);border-radius:1.5px;"></div>
<div style="left:485.54px;top:278.54px;width:18.3px;height:10px;background:#8E86AE;border:1px solid rgba(150,150,150,0.38);border-radius:1.5px;"></div>
<div style="left:506.26px;top:278.54px;width:18.3px;height:10px;background:#729FCF;border:1px solid rgba(150,150,150,0.38);border-radius:1.5px;"></div>
<div style="left:526.98px;top:278.54px;width:18.3px;height:10px;background:#81ACA6;border:1px solid rgba(150,150,150,0.38);border-radius:1.5px;"></div>
<div style="left:547.7px;top:278.54px;width:18.3px;height:10px;background:#77BC65;border:1px solid rgba(150,150,150,0.38);border-radius:1.5px;"></div>
<div style="left:568.42px;top:278.54px;width:18.3px;height:10px;background:#D4EA6B;border:1px solid rgba(150,150,150,0.38);border-radius:1.5px;"></div>
<div style="left:340.5px;top:290.65px;width:18.3px;height:10px;background:#FFFF38;border:1px solid rgba(150,150,150,0.38);border-radius:1.5px;"></div>
<div style="left:361.22px;top:290.65px;width:18.3px;height:10px;background:#FFD428;border:1px solid rgba(150,150,150,0.38);border-radius:1.5px;"></div>
<div style="left:381.94px;top:290.65px;width:18.3px;height:10px;background:#FF860D;border:1px solid rgba(150,150,150,0.38);border-radius:1.5px;"></div>
<div style="left:402.66px;top:290.65px;width:18.3px;height:10px;background:#FF5429;border:1px solid rgba(150,150,150,0.38);border-radius:1.5px;"></div>
<div style="left:423.38px;top:290.65px;width:18.3px;height:10px;background:#FF3838;border:1px solid rgba(150,150,150,0.38);border-radius:1.5px;"></div>
<div style="left:444.1px;top:290.65px;width:18.3px;height:10px;background:#D62E4E;border:1px solid rgba(150,150,150,0.38);border-radius:1.5px;"></div>
<div style="left:464.82px;top:290.65px;width:18.3px;height:10px;background:#8D1D75;border:1px solid rgba(150,150,150,0.38);border-radius:1.5px;"></div>
<div style="left:485.54px;top:290.65px;width:18.3px;height:10px;background:#6B5E9B;border:1px solid rgba(150,150,150,0.38);border-radius:1.5px;"></div>
<div style="left:506.26px;top:290.65px;width:18.3px;height:10px;background:#5983B0;border:1px solid rgba(150,150,150,0.38);border-radius:1.5px;"></div>
<div style="left:526.98px;top:290.65px;width:18.3px;height:10px;background:#50938A;border:1px solid rgba(150,150,150,0.38);border-radius:1.5px;"></div>
<div style="left:547.7px;top:290.65px;width:18.3px;height:10px;background:#3FAF46;border:1px solid rgba(150,150,150,0.38);border-radius:1.5px;"></div>
<div style="left:568.42px;top:290.65px;width:18.3px;height:10px;background:#BBE33D;border:1px solid rgba(150,150,150,0.38);border-radius:1.5px;"></div>
<div style="left:340.5px;top:302.76px;width:18.3px;height:10px;background:#E6E905;border:1px solid rgba(150,150,150,0.38);border-radius:1.5px;"></div>
<div style="left:361.22px;top:302.76px;width:18.3px;height:10px;background:#E8A202;border:1px solid rgba(150,150,150,0.38);border-radius:1.5px;"></div>
<div style="left:381.94px;top:302.76px;width:18.3px;height:10px;background:#EA7500;border:1px solid rgba(150,150,150,0.38);border-radius:1.5px;"></div>
<div style="left:402.66px;top:302.76px;width:18.3px;height:10px;background:#ED4C05;border:1px solid rgba(150,150,150,0.38);border-radius:1.5px;"></div>
<div style="left:423.38px;top:302.76px;width:18.3px;height:10px;background:#F10D0C;border:1px solid rgba(150,150,150,0.38);border-radius:1.5px;"></div>
<div style="left:444.1px;top:302.76px;width:18.3px;height:10px;background:#A7074B;border:1px solid rgba(150,150,150,0.38);border-radius:1.5px;"></div>
<div style="left:464.82px;top:302.76px;width:18.3px;height:10px;background:#780373;border:1px solid rgba(150,150,150,0.38);border-radius:1.5px;"></div>
<div style="left:485.54px;top:302.76px;width:18.3px;height:10px;background:#5B277D;border:1px solid rgba(150,150,150,0.38);border-radius:1.5px;"></div>
<div style="left:506.26px;top:302.76px;width:18.3px;height:10px;background:#3465A4;border:1px solid rgba(150,150,150,0.38);border-radius:1.5px;"></div>
<div style="left:526.98px;top:302.76px;width:18.3px;height:10px;background:#168253;border:1px solid rgba(150,150,150,0.38);border-radius:1.5px;"></div>
<div style="left:547.7px;top:302.76px;width:18.3px;height:10px;background:#069A2E;border:1px solid rgba(150,150,150,0.38);border-radius:1.5px;"></div>
<div style="left:568.42px;top:302.76px;width:18.3px;height:10px;background:#5EB91E;border:1px solid rgba(150,150,150,0.38);border-radius:1.5px;"></div>
<div style="left:340.5px;top:314.87px;width:18.3px;height:10px;background:#ACB20C;border:1px solid rgba(150,150,150,0.38);border-radius:1.5px;"></div>
<div style="left:361.22px;top:314.87px;width:18.3px;height:10px;background:#B47804;border:1px solid rgba(150,150,150,0.38);border-radius:1.5px;"></div>
<div style="left:381.94px;top:314.87px;width:18.3px;height:10px;background:#B85C00;border:1px solid rgba(150,150,150,0.38);border-radius:1.5px;"></div>
<div style="left:402.66px;top:314.87px;width:18.3px;height:10px;background:#BE480A;border:1px solid rgba(150,150,150,0.38);border-radius:1.5px;"></div>
<div style="left:423.38px;top:314.87px;width:18.3px;height:10px;background:#C9211E;border:1px solid rgba(150,150,150,0.38);border-radius:1.5px;"></div>
<div style="left:444.1px;top:314.87px;width:18.3px;height:10px;background:#861141;border:1px solid rgba(150,150,150,0.38);border-radius:1.5px;"></div>
<div style="left:464.82px;top:314.87px;width:18.3px;height:10px;background:#650953;border:1px solid rgba(150,150,150,0.38);border-radius:1.5px;"></div>
<div style="left:485.54px;top:314.87px;width:18.3px;height:10px;background:#55215B;border:1px solid rgba(150,150,150,0.38);border-radius:1.5px;"></div>
<div style="left:506.26px;top:314.87px;width:18.3px;height:10px;background:#355269;border:1px solid rgba(150,150,150,0.38);border-radius:1.5px;"></div>
<div style="left:526.98px;top:314.87px;width:18.3px;height:10px;background:#1E6A39;border:1px solid rgba(150,150,150,0.38);border-radius:1.5px;"></div>
<div style="left:547.7px;top:314.87px;width:18.3px;height:10px;background:#127622;border:1px solid rgba(150,150,150,0.38);border-radius:1.5px;"></div>
<div style="left:568.42px;top:314.87px;width:18.3px;height:10px;background:#468A1A;border:1px solid rgba(150,150,150,0.38);border-radius:1.5px;"></div>
<div style="left:340.5px;top:326.98px;width:18.3px;height:10px;background:#706E0C;border:1px solid rgba(150,150,150,0.38);border-radius:1.5px;"></div>
<div style="left:361.22px;top:326.98px;width:18.3px;height:10px;background:#784B04;border:1px solid rgba(150,150,150,0.38);border-radius:1.5px;"></div>
<div style="left:381.94px;top:326.98px;width:18.3px;height:10px;background:#7B3D00;border:1px solid rgba(150,150,150,0.38);border-radius:1.5px;"></div>
<div style="left:402.66px;top:326.98px;width:18.3px;height:10px;background:#813709;border:1px solid rgba(150,150,150,0.38);border-radius:1.5px;"></div>
<div style="left:423.38px;top:326.98px;width:18.3px;height:10px;background:#8D281E;border:1px solid rgba(150,150,150,0.38);border-radius:1.5px;"></div>
<div style="left:444.1px;top:326.98px;width:18.3px;height:10px;background:#611729;border:1px solid rgba(150,150,150,0.38);border-radius:1.5px;"></div>
<div style="left:464.82px;top:326.98px;width:18.3px;height:10px;background:#4E102D;border:1px solid rgba(150,150,150,0.38);border-radius:1.5px;"></div>
<div style="left:485.54px;top:326.98px;width:18.3px;height:10px;background:#481D32;border:1px solid rgba(150,150,150,0.38);border-radius:1.5px;"></div>
<div style="left:506.26px;top:326.98px;width:18.3px;height:10px;background:#383D3C;border:1px solid rgba(150,150,150,0.38);border-radius:1.5px;"></div>
<div style="left:526.98px;top:326.98px;width:18.3px;height:10px;background:#28471F;border:1px solid rgba(150,150,150,0.38);border-radius:1.5px;"></div>
<div style="left:547.7px;top:326.98px;width:18.3px;height:10px;background:#224B12;border:1px solid rgba(150,150,150,0.38);border-radius:1.5px;"></div>
<div style="left:568.42px;top:326.98px;width:18.3px;height:10px;background:#395511;border:1px solid rgba(150,150,150,0.38);border-radius:1.5px;"></div>
<div style="left:340.5px;top:339.09px;width:18.3px;height:10px;background:#443205;border:1px solid rgba(150,150,150,0.38);border-radius:1.5px;"></div>
<div style="left:361.22px;top:339.09px;width:18.3px;height:10px;background:#472702;border:1px solid rgba(150,150,150,0.38);border-radius:1.5px;"></div>
<div style="left:381.94px;top:339.09px;width:18.3px;height:10px;background:#492300;border:1px solid rgba(150,150,150,0.38);border-radius:1.5px;"></div>
<div style="left:402.66px;top:339.09px;width:18.3px;height:10px;background:#4B2204;border:1px solid rgba(150,150,150,0.38);border-radius:1.5px;"></div>
<div style="left:423.38px;top:339.09px;width:18.3px;height:10px;background:#50200C;border:1px solid rgba(150,150,150,0.38);border-radius:1.5px;"></div>
<div style="left:444.1px;top:339.09px;width:18.3px;height:10px;background:#41190D;border:1px solid rgba(150,150,150,0.38);border-radius:1.5px;"></div>
<div style="left:464.82px;top:339.09px;width:18.3px;height:10px;background:#3B160E;border:1px solid rgba(150,150,150,0.38);border-radius:1.5px;"></div>
<div style="left:485.54px;top:339.09px;width:18.3px;height:10px;background:#3A1A0F;border:1px solid rgba(150,150,150,0.38);border-radius:1.5px;"></div>
<div style="left:506.26px;top:339.09px;width:18.3px;height:10px;background:#362413;border:1px solid rgba(150,150,150,0.38);border-radius:1.5px;"></div>
<div style="left:526.98px;top:339.09px;width:18.3px;height:10px;background:#302709;border:1px solid rgba(150,150,150,0.38);border-radius:1.5px;"></div>
<div style="left:547.7px;top:339.09px;width:18.3px;height:10px;background:#2E2706;border:1px solid rgba(150,150,150,0.38);border-radius:1.5px;"></div>
<div style="left:568.42px;top:339.09px;width:18.3px;height:10px;background:#342A06;border:1px solid rgba(150,150,150,0.38);border-radius:1.5px;"></div>
<div style="left:525.4px;top:229px;width:20.6px;height:11.9px;border:2px solid #1c1c1c;background:#ddd;box-shadow:inset 0 0 0 0.8px #fff;"></div>
<div style="left:525.9px;top:229.5px;width:19.6px;height:10.9px;border:1px dotted #808080;"></div>
<div style="left:340px;top:436.3px;width:248px;height:0.8px;background:#c9c9c9;"></div>
<span class="t" style="left:441.7px;top:440.81px;font-size:9.2px;color:#111;transform:scaleX(0.898);">Light Gray 4</span>
<div style="left:602px;top:215px;width:143.3px;height:117.7px;background:#dddddd;border:1px solid #3c3c3c;"></div>
<div style="left:534.3px;top:322.8px;width:44.6px;height:14.8px;background:#ffffe1;border:1px solid #4a4a4a;"></div>
<span class="t" style="left:537.4px;top:326.51px;font-size:9.2px;color:#111;transform:scaleX(0.820);">Dark Teal 1</span>
<div style="left:328px;top:470px;width:59.3px;height:20.3px;border:1px solid #8f8f8f;border-radius:2px;background:linear-gradient(#f3f3f3 0,#ececec 48%,#dfdfdf 52%,#d3d3d3 100%);box-shadow:inset 0 0 0 0.7px #fbfbfb;"></div>
<span class="t" style="left:349.9px;top:477.26px;font-size:9.2px;color:#111;transform:scaleX(0.819);"><u>H</u>elp</span>
<div style="left:494.5px;top:470px;width:59.2px;height:20.3px;border:1px solid #3f9fd6;border-radius:2px;background:linear-gradient(#f3f3f3 0,#ececec 48%,#dfdfdf 52%,#d3d3d3 100%);box-shadow:inset 0 0 0 1px #a6ddf6;"></div>
<span class="t" style="left:518.35px;top:477.26px;font-size:9.2px;color:#111;transform:scaleX(0.865);">OK</span>
<div style="left:559.3px;top:470px;width:59.1px;height:20.3px;border:1px solid #8f8f8f;border-radius:2px;background:linear-gradient(#f3f3f3 0,#ececec 48%,#dfdfdf 52%,#d3d3d3 100%);box-shadow:inset 0 0 0 0.7px #fbfbfb;"></div>
<span class="t" style="left:576.1px;top:477.26px;font-size:9.2px;color:#111;transform:scaleX(0.890);">Cancel</span>
<div style="left:624px;top:470px;width:59px;height:20.3px;border:1px solid #8f8f8f;border-radius:2px;background:linear-gradient(#f3f3f3 0,#ececec 48%,#dfdfdf 52%,#d3d3d3 100%);box-shadow:inset 0 0 0 0.7px #fbfbfb;"></div>
<span class="t" style="left:643.25px;top:477.26px;font-size:9.2px;color:#111;transform:scaleX(0.853);"><u>R</u>eset</span>
<div style="left:689px;top:470px;width:59.3px;height:20.3px;border:1px solid #8f8f8f;border-radius:2px;background:linear-gradient(#f3f3f3 0,#ececec 48%,#dfdfdf 52%,#d3d3d3 100%);box-shadow:inset 0 0 0 0.7px #fbfbfb;"></div>
<span class="t" style="left:701.9px;top:477.26px;font-size:9.2px;color:#111;transform:scaleX(0.897);"><u>S</u>tandard</span>
<div style="left:320.2px;top:509px;width:59.6px;height:20px;border:1px solid #8f8f8f;border-radius:2px;background:linear-gradient(#f3f3f3 0,#ececec 48%,#dfdfdf 52%,#d3d3d3 100%);box-shadow:inset 0 0 0 0.7px #fbfbfb;"></div>
<span class="t" style="left:342.25px;top:516.11px;font-size:9.2px;color:#111;transform:scaleX(0.819);"><u>H</u>elp</span>
<div style="left:632.4px;top:509px;width:59.6px;height:20px;border:1px solid #8f8f8f;border-radius:2px;background:linear-gradient(#f3f3f3 0,#ececec 48%,#dfdfdf 52%,#d3d3d3 100%);box-shadow:inset 0 0 0 0.7px #fbfbfb;"></div>
<span class="t" style="left:656.45px;top:516.11px;font-size:9.2px;color:#111;transform:scaleX(0.865);">OK</span>
<div style="left:697.1px;top:509px;width:59.7px;height:20px;border:1px solid #8f8f8f;border-radius:2px;background:linear-gradient(#f3f3f3 0,#ececec 48%,#dfdfdf 52%,#d3d3d3 100%);box-shadow:inset 0 0 0 0.7px #fbfbfb;"></div>
<span class="t" style="left:714.2px;top:516.11px;font-size:9.2px;color:#111;transform:scaleX(0.890);">Cancel</span>
<svg style="left:0;top:0;pointer-events:none" width="1024" height="541" viewBox="0 0 1024 541"><g fill="none" stroke="#ec1c24" stroke-width="3.1" stroke-linecap="round" stroke-linejoin="round"><path d="M488 94.7L542.6 168.2"/><path d="M526.8 166.2L542.6 168.2L544.9 155.7"/><path d="M580.3 187L547.2 224.6"/><path d="M566.5 224.2L547.2 224.6L544.3 207.5"/></g></svg>
</div></body></html>
